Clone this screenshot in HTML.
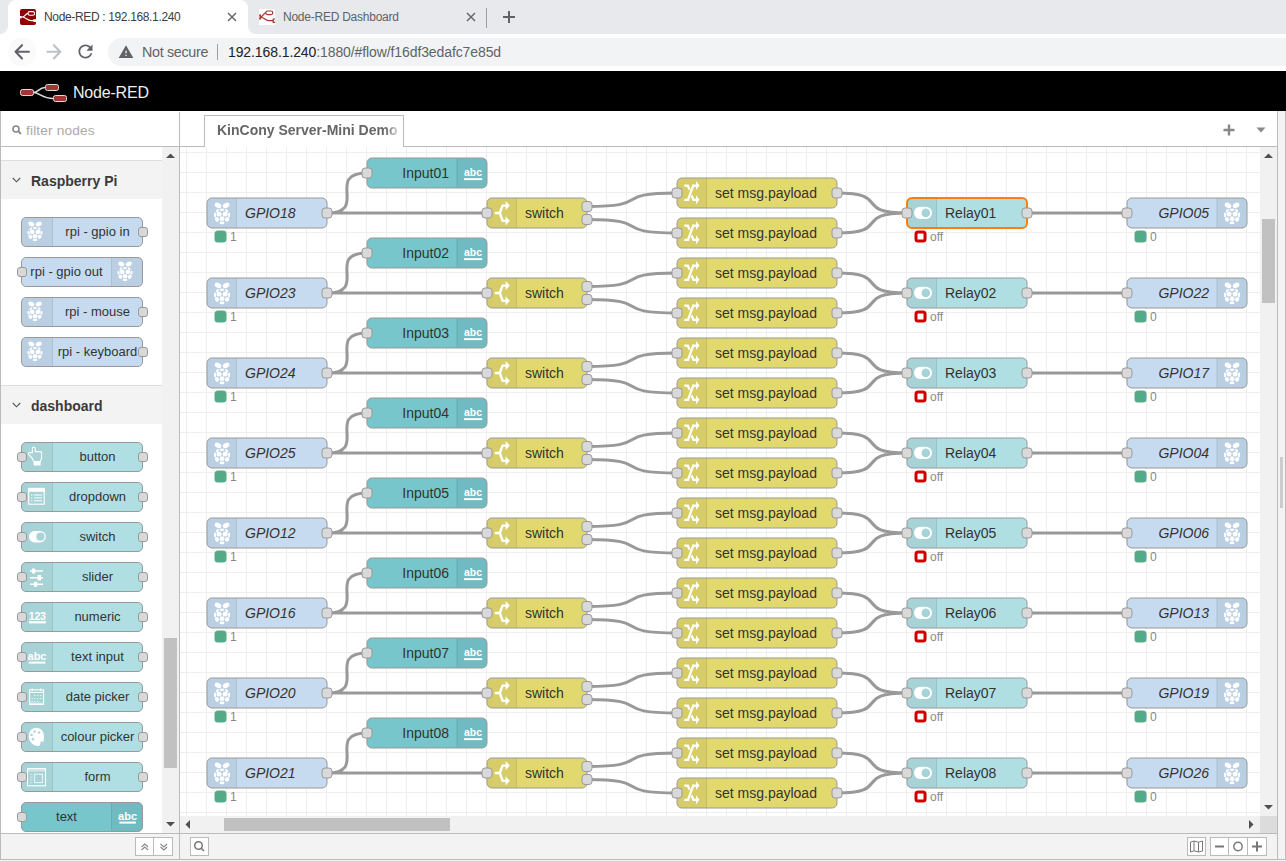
<!DOCTYPE html>
<html><head><meta charset="utf-8"><style>
*{box-sizing:border-box}
html,body{margin:0;padding:0;width:1286px;height:861px;overflow:hidden;background:#fff;font-family:"Liberation Sans", sans-serif}
.a{position:absolute}
</style></head><body>
<div class="a" style="left:0;top:0;width:1286px;height:34px;background:#e7e9ec"></div><div class="a" style="left:0;top:26px;width:264px;height:8px;background:#fff"></div><div class="a" style="left:-10px;top:0;width:18px;height:34px;background:#e7e9ec;border-bottom-right-radius:8px"></div><div class="a" style="left:248px;top:0;width:20px;height:34px;background:#e7e9ec;border-bottom-left-radius:8px"></div><div class="a" style="left:8px;top:0;width:240px;height:34px;background:#fff;border-radius:8px 8px 0 0"></div><svg class="a" style="left:20px;top:9px" width="16" height="16" viewBox="0 0 16 16"><rect x="0" y="0" width="16" height="16" rx="2" fill="#8f0000"/><g fill="none" stroke="#fff" stroke-width="1.1"><rect x="8" y="2.6" width="6.6" height="3.6" rx="1.8"/><path d="M0 8 H2.6 C5 8 5.6 4.4 8 4.4"/><path d="M2.6 8 C5.5 8 7.5 11.6 11 11.6 H14"/></g><rect x="13.4" y="10.2" width="2.6" height="2.8" fill="#fff"/><rect x="0" y="7" width="1.6" height="2.4" fill="#fff"/></svg><div class="a" style="left:44px;top:10px;font-size:12px;letter-spacing:-0.35px;color:#3c4043;line-height:14px;white-space:nowrap">Node-RED : 192.168.1.240</div><svg class="a" style="left:227px;top:12px" width="10" height="10" viewBox="0 0 10 10"><path d="M1 1 L9 9 M9 1 L1 9" stroke="#5f6368" stroke-width="1.4"/></svg><svg class="a" style="left:259px;top:9px" width="16" height="16" viewBox="0 0 16 16"><rect x="0" y="0" width="16" height="16" fill="#fff"/><g fill="none" stroke="#a33" stroke-width="1.2"><rect x="6.8" y="2" width="7" height="3.6" rx="1.8"/><path d="M0 8 H1.5 C4 8 4.5 3.8 6.8 3.8"/><path d="M1.5 8 C4.5 8 6.5 11.6 9.5 11.6 H14.5"/></g><path d="M0 6.2 H1.6 V9.8 H0" fill="none" stroke="#a33" stroke-width="1.2"/><path d="M16 10 H14.2 V13.4 H16" fill="none" stroke="#a33" stroke-width="1.2"/></svg><div class="a" style="left:283px;top:10px;font-size:12px;letter-spacing:-0.24px;color:#5f6368;line-height:14px;white-space:nowrap">Node-RED Dashboard</div><svg class="a" style="left:466px;top:12px" width="10" height="10" viewBox="0 0 10 10"><path d="M1 1 L9 9 M9 1 L1 9" stroke="#5f6368" stroke-width="1.4"/></svg><div class="a" style="left:486px;top:8px;width:1px;height:20px;background:#9aa0a6"></div><svg class="a" style="left:502px;top:10px" width="14" height="14" viewBox="0 0 14 14"><path d="M7 1 V13 M1 7 H13" stroke="#5f6368" stroke-width="2"/></svg><div class="a" style="left:0;top:34px;width:1286px;height:37px;background:#fff"></div><div class="a" style="left:8px;top:38px;width:28px;height:28px;border-radius:14px;background:#fafafa"></div><svg class="a" style="left:0;top:34.4px" width="40" height="36" viewBox="0 0 40 36"><path d="M28.9 17.8 H16.5 M22 11.2 L15.6 17.8 L22 24.4" fill="none" stroke="#5f6368" stroke-width="2.1" stroke-linecap="round" stroke-linejoin="round"/></svg><svg class="a" style="left:40px;top:34.4px" width="30" height="36" viewBox="0 0 30 36"><path d="M7.4 17.8 H20 M13.8 11.2 L20.3 17.8 L13.8 24.4" fill="none" stroke="#bdc1c6" stroke-width="2.1" stroke-linecap="round" stroke-linejoin="round"/></svg><svg class="a" style="left:75.4px;top:41.4px" width="21" height="21" viewBox="0 0 24 24"><path fill="#5f6368" d="M17.65 6.35C16.2 4.9 14.21 4 12 4c-4.42 0-7.99 3.58-7.99 8s3.57 8 7.99 8c3.73 0 6.84-2.55 7.73-6h-2.08c-.82 2.33-3.04 4-5.65 4-3.31 0-6-2.69-6-6s2.69-6 6-6c1.66 0 3.14.69 4.22 1.78L13 11h7V4l-2.35 2.35z"/></svg><div class="a" style="left:108px;top:38px;width:1200px;height:28px;background:#f1f3f4;border-radius:14px"></div><svg class="a" style="left:118px;top:44px" width="16" height="16" viewBox="0 0 24 24"><path fill="#5f6368" d="M1 21h22L12 2 1 21zm12-3h-2v-2h2v2zm0-4h-2v-4h2v4z"/></svg><div class="a" style="left:142px;top:43.5px;font-size:14.3px;letter-spacing:-0.3px;color:#5f6368;line-height:16px;white-space:nowrap">Not secure</div><div class="a" style="left:217px;top:44px;width:1px;height:16px;background:#9aa0a6"></div><div class="a" style="left:228px;top:44px;font-size:14px;letter-spacing:-0.1px;color:#5f6368;line-height:16px;white-space:nowrap"><span style="color:#202124">192.168.1.240</span>:1880/#flow/f16df3edafc7e85d</div><div class="a" style="left:0;top:71px;width:1286px;height:40px;background:#000"></div><svg class="a" style="left:18px;top:82px" width="52" height="22" viewBox="0 0 52 22"><g fill="none" stroke="#ddd" stroke-width="1.6"><path d="M15.5 10.5 C20 10.5 21 5.5 27 5.5"/><path d="M15.5 10.5 C21 10.5 25 16.5 35 16.5"/></g><g fill="#a33535" stroke="#ddd" stroke-width="1"><rect x="2.5" y="7.5" width="13" height="6" rx="2"/><rect x="27.5" y="2.5" width="13" height="6" rx="2"/><rect x="35.5" y="13.5" width="13" height="6" rx="2"/></g></svg><div class="a" style="left:73px;top:84px;font-size:16px;letter-spacing:-0.2px;color:#eee;line-height:18px;white-space:nowrap">Node-RED</div>
<div class="a" style="left:180px;top:147px;width:1080px;height:669px;background:#fff"></div>
<div class="a" style="left:0;top:111px;width:180px;height:750px;background:#fff"></div><div class="a" style="left:0;top:111px;width:1px;height:749px;background:#bbb"></div><div class="a" style="left:179px;top:112px;width:1px;height:748px;background:#bbb"></div><div class="a" style="left:0;top:146px;width:1277px;height:1px;background:#bbb"></div><svg class="a" style="left:12px;top:125px" width="10" height="10" viewBox="0 0 10 10"><circle cx="4" cy="4" r="3" fill="none" stroke="#888" stroke-width="1.6"/><path d="M6.2 6.2 L9 9" stroke="#888" stroke-width="1.8"/></svg><div class="a" style="left:26px;top:122.5px;font-size:13.7px;letter-spacing:0.15px;color:#aaa;line-height:16px;white-space:nowrap">filter nodes</div><div class="a" style="left:1px;top:160px;width:161px;height:1px;background:#ddd"></div><div class="a" style="left:1px;top:161px;width:161px;height:38px;background:#f3f3f3"></div><svg class="a" style="left:12px;top:177px" width="10" height="7" viewBox="0 0 10 7"><path d="M0.8 1 L4.5 4.8 L8.2 1" fill="none" stroke="#555" stroke-width="1.1"/></svg><div class="a" style="left:31px;top:173px;font-size:14px;font-weight:bold;color:#3a3a3a;line-height:16px;white-space:nowrap">Raspberry Pi</div><div class="a" style="left:1px;top:385px;width:161px;height:1px;background:#ddd"></div><div class="a" style="left:1px;top:386px;width:161px;height:38px;background:#f3f3f3"></div><svg class="a" style="left:12px;top:402px" width="10" height="7" viewBox="0 0 10 7"><path d="M0.8 1 L4.5 4.8 L8.2 1" fill="none" stroke="#555" stroke-width="1.1"/></svg><div class="a" style="left:31px;top:398px;font-size:14px;font-weight:bold;color:#3a3a3a;line-height:16px;white-space:nowrap">dashboard</div><div class="a" style="left:21px;top:217px;width:122px;height:30px;background:#c6dbef;border:1px solid #999;border-radius:5px;overflow:hidden"><div class="a" style="left:0;top:0;width:31px;height:28px;background:rgba(0,0,0,0.05);border-right:1px solid rgba(0,0,0,0.07)"></div><svg class="a" style="left:-2px;top:-1px" width="32" height="30" viewBox="0 0 32 30"><g fill="#fff" transform="translate(15 14) scale(0.92) translate(-15 -14)"><ellipse cx="11.00" cy="6.40" rx="3.5" ry="2.4" transform="rotate(28 11.00 6.40)"/><ellipse cx="19.10" cy="6.40" rx="3.5" ry="2.4" transform="rotate(-28 19.10 6.40)"/><ellipse cx="14.90" cy="10.80" rx="2.3" ry="1.2"/><ellipse cx="10.40" cy="11.50" rx="2.0" ry="1.0" transform="rotate(-48 10.40 11.50)"/><ellipse cx="19.60" cy="11.50" rx="2.0" ry="1.0" transform="rotate(48 19.60 11.50)"/><ellipse cx="12.00" cy="15.00" rx="2.5" ry="2.5"/><ellipse cx="18.10" cy="15.00" rx="2.5" ry="2.5"/><ellipse cx="8.00" cy="15.90" rx="1.15" ry="2.3"/><ellipse cx="22.00" cy="15.90" rx="1.15" ry="2.3"/><ellipse cx="15.05" cy="19.70" rx="2.5" ry="2.4"/><ellipse cx="10.00" cy="20.30" rx="2.0" ry="2.4" transform="rotate(-35 10.00 20.30)"/><ellipse cx="20.10" cy="20.30" rx="2.0" ry="2.4" transform="rotate(35 20.10 20.30)"/><ellipse cx="15.00" cy="23.90" rx="2.5" ry="1.35"/></g></svg><div class="a" style="left:31px;top:4px;width:89px;text-align:center;font-size:13px;color:#333;line-height:20px;white-space:nowrap">rpi - gpio in</div></div><div class="a" style="left:138px;top:227px;width:10px;height:10px;background:#d9d9d9;border:1px solid #999;border-radius:3px"></div><div class="a" style="left:21px;top:257px;width:122px;height:30px;background:#c6dbef;border:1px solid #999;border-radius:5px;overflow:hidden"><div class="a" style="right:0;top:0;width:31px;height:28px;background:rgba(0,0,0,0.05);border-left:1px solid rgba(0,0,0,0.07)"></div><svg class="a" style="right:0;top:-1px" width="32" height="30" viewBox="0 0 32 30"><g fill="#fff" transform="translate(15 14) scale(0.92) translate(-15 -14)"><ellipse cx="11.00" cy="6.40" rx="3.5" ry="2.4" transform="rotate(28 11.00 6.40)"/><ellipse cx="19.10" cy="6.40" rx="3.5" ry="2.4" transform="rotate(-28 19.10 6.40)"/><ellipse cx="14.90" cy="10.80" rx="2.3" ry="1.2"/><ellipse cx="10.40" cy="11.50" rx="2.0" ry="1.0" transform="rotate(-48 10.40 11.50)"/><ellipse cx="19.60" cy="11.50" rx="2.0" ry="1.0" transform="rotate(48 19.60 11.50)"/><ellipse cx="12.00" cy="15.00" rx="2.5" ry="2.5"/><ellipse cx="18.10" cy="15.00" rx="2.5" ry="2.5"/><ellipse cx="8.00" cy="15.90" rx="1.15" ry="2.3"/><ellipse cx="22.00" cy="15.90" rx="1.15" ry="2.3"/><ellipse cx="15.05" cy="19.70" rx="2.5" ry="2.4"/><ellipse cx="10.00" cy="20.30" rx="2.0" ry="2.4" transform="rotate(-35 10.00 20.30)"/><ellipse cx="20.10" cy="20.30" rx="2.0" ry="2.4" transform="rotate(35 20.10 20.30)"/><ellipse cx="15.00" cy="23.90" rx="2.5" ry="1.35"/></g></svg><div class="a" style="left:0px;top:4px;width:89px;text-align:center;font-size:13px;color:#333;line-height:20px;white-space:nowrap">rpi - gpio out</div></div><div class="a" style="left:17px;top:267px;width:10px;height:10px;background:#d9d9d9;border:1px solid #999;border-radius:3px"></div><div class="a" style="left:21px;top:297px;width:122px;height:30px;background:#c6dbef;border:1px solid #999;border-radius:5px;overflow:hidden"><div class="a" style="left:0;top:0;width:31px;height:28px;background:rgba(0,0,0,0.05);border-right:1px solid rgba(0,0,0,0.07)"></div><svg class="a" style="left:-2px;top:-1px" width="32" height="30" viewBox="0 0 32 30"><g fill="#fff" transform="translate(15 14) scale(0.92) translate(-15 -14)"><ellipse cx="11.00" cy="6.40" rx="3.5" ry="2.4" transform="rotate(28 11.00 6.40)"/><ellipse cx="19.10" cy="6.40" rx="3.5" ry="2.4" transform="rotate(-28 19.10 6.40)"/><ellipse cx="14.90" cy="10.80" rx="2.3" ry="1.2"/><ellipse cx="10.40" cy="11.50" rx="2.0" ry="1.0" transform="rotate(-48 10.40 11.50)"/><ellipse cx="19.60" cy="11.50" rx="2.0" ry="1.0" transform="rotate(48 19.60 11.50)"/><ellipse cx="12.00" cy="15.00" rx="2.5" ry="2.5"/><ellipse cx="18.10" cy="15.00" rx="2.5" ry="2.5"/><ellipse cx="8.00" cy="15.90" rx="1.15" ry="2.3"/><ellipse cx="22.00" cy="15.90" rx="1.15" ry="2.3"/><ellipse cx="15.05" cy="19.70" rx="2.5" ry="2.4"/><ellipse cx="10.00" cy="20.30" rx="2.0" ry="2.4" transform="rotate(-35 10.00 20.30)"/><ellipse cx="20.10" cy="20.30" rx="2.0" ry="2.4" transform="rotate(35 20.10 20.30)"/><ellipse cx="15.00" cy="23.90" rx="2.5" ry="1.35"/></g></svg><div class="a" style="left:31px;top:4px;width:89px;text-align:center;font-size:13px;color:#333;line-height:20px;white-space:nowrap">rpi - mouse</div></div><div class="a" style="left:138px;top:307px;width:10px;height:10px;background:#d9d9d9;border:1px solid #999;border-radius:3px"></div><div class="a" style="left:21px;top:337px;width:122px;height:30px;background:#c6dbef;border:1px solid #999;border-radius:5px;overflow:hidden"><div class="a" style="left:0;top:0;width:31px;height:28px;background:rgba(0,0,0,0.05);border-right:1px solid rgba(0,0,0,0.07)"></div><svg class="a" style="left:-2px;top:-1px" width="32" height="30" viewBox="0 0 32 30"><g fill="#fff" transform="translate(15 14) scale(0.92) translate(-15 -14)"><ellipse cx="11.00" cy="6.40" rx="3.5" ry="2.4" transform="rotate(28 11.00 6.40)"/><ellipse cx="19.10" cy="6.40" rx="3.5" ry="2.4" transform="rotate(-28 19.10 6.40)"/><ellipse cx="14.90" cy="10.80" rx="2.3" ry="1.2"/><ellipse cx="10.40" cy="11.50" rx="2.0" ry="1.0" transform="rotate(-48 10.40 11.50)"/><ellipse cx="19.60" cy="11.50" rx="2.0" ry="1.0" transform="rotate(48 19.60 11.50)"/><ellipse cx="12.00" cy="15.00" rx="2.5" ry="2.5"/><ellipse cx="18.10" cy="15.00" rx="2.5" ry="2.5"/><ellipse cx="8.00" cy="15.90" rx="1.15" ry="2.3"/><ellipse cx="22.00" cy="15.90" rx="1.15" ry="2.3"/><ellipse cx="15.05" cy="19.70" rx="2.5" ry="2.4"/><ellipse cx="10.00" cy="20.30" rx="2.0" ry="2.4" transform="rotate(-35 10.00 20.30)"/><ellipse cx="20.10" cy="20.30" rx="2.0" ry="2.4" transform="rotate(35 20.10 20.30)"/><ellipse cx="15.00" cy="23.90" rx="2.5" ry="1.35"/></g></svg><div class="a" style="left:31px;top:4px;width:89px;text-align:center;font-size:13px;color:#333;line-height:20px;white-space:nowrap">rpi - keyboard</div></div><div class="a" style="left:138px;top:347px;width:10px;height:10px;background:#d9d9d9;border:1px solid #999;border-radius:3px"></div><div class="a" style="left:21px;top:442px;width:122px;height:30px;background:#b0dfe3;border:1px solid #999;border-radius:5px;overflow:hidden"><div class="a" style="left:0;top:0;width:31px;height:28px;background:rgba(0,0,0,0.05);border-right:1px solid rgba(0,0,0,0.07)"></div><svg class="a" style="left:-2px;top:-1px" width="32" height="30" viewBox="0 0 32 30"><path d="M12.5 16.5 L8.8 12.6 Q8 11.2 9.5 10.6 L12.4 10.6 L12.4 6.2 Q12.6 5 13.8 5 Q15 5 15.2 6.2 L15.2 9.6 L20.6 9.6 Q21.6 9.8 21.6 11 L21.6 16.8 L20.4 18.5 L20.4 19.5 L13.6 19.5 Z" fill="none" stroke="#fff" stroke-width="1.1"/><rect x="13.6" y="19.6" width="7" height="3.8" rx="0.5" fill="#fff"/></svg><div class="a" style="left:31px;top:4px;width:89px;text-align:center;font-size:13px;color:#333;line-height:20px;white-space:nowrap">button</div></div><div class="a" style="left:17px;top:452px;width:10px;height:10px;background:#d9d9d9;border:1px solid #999;border-radius:3px"></div><div class="a" style="left:138px;top:452px;width:10px;height:10px;background:#d9d9d9;border:1px solid #999;border-radius:3px"></div><div class="a" style="left:21px;top:482px;width:122px;height:30px;background:#b0dfe3;border:1px solid #999;border-radius:5px;overflow:hidden"><div class="a" style="left:0;top:0;width:31px;height:28px;background:rgba(0,0,0,0.05);border-right:1px solid rgba(0,0,0,0.07)"></div><svg class="a" style="left:-2px;top:-1px" width="32" height="30" viewBox="0 0 32 30"><rect x="8.7" y="6.4" width="15.5" height="15.8" fill="none" stroke="#fff" stroke-width="1.1"/><rect x="8.2" y="6" width="16.5" height="3.8" fill="#fff"/><g stroke="#fff" stroke-width="1"><path d="M11 13 H12.4 M14 13 H22 M11 15.9 H12.4 M14 15.9 H22 M11 18.8 H12.4 M14 18.8 H22"/></g></svg><div class="a" style="left:31px;top:4px;width:89px;text-align:center;font-size:13px;color:#333;line-height:20px;white-space:nowrap">dropdown</div></div><div class="a" style="left:17px;top:492px;width:10px;height:10px;background:#d9d9d9;border:1px solid #999;border-radius:3px"></div><div class="a" style="left:138px;top:492px;width:10px;height:10px;background:#d9d9d9;border:1px solid #999;border-radius:3px"></div><div class="a" style="left:21px;top:522px;width:122px;height:30px;background:#b0dfe3;border:1px solid #999;border-radius:5px;overflow:hidden"><div class="a" style="left:0;top:0;width:31px;height:28px;background:rgba(0,0,0,0.05);border-right:1px solid rgba(0,0,0,0.07)"></div><svg class="a" style="left:-2px;top:-1px" width="32" height="30" viewBox="0 0 32 30"><rect x="9" y="8.9" width="16.8" height="11.6" rx="5.8" fill="#fff"/><circle cx="20.4" cy="14.7" r="4.1" fill="#a8d4d8"/></svg><div class="a" style="left:31px;top:4px;width:89px;text-align:center;font-size:13px;color:#333;line-height:20px;white-space:nowrap">switch</div></div><div class="a" style="left:17px;top:532px;width:10px;height:10px;background:#d9d9d9;border:1px solid #999;border-radius:3px"></div><div class="a" style="left:138px;top:532px;width:10px;height:10px;background:#d9d9d9;border:1px solid #999;border-radius:3px"></div><div class="a" style="left:21px;top:562px;width:122px;height:30px;background:#b0dfe3;border:1px solid #999;border-radius:5px;overflow:hidden"><div class="a" style="left:0;top:0;width:31px;height:28px;background:rgba(0,0,0,0.05);border-right:1px solid rgba(0,0,0,0.07)"></div><svg class="a" style="left:-2px;top:-1px" width="32" height="30" viewBox="0 0 32 30"><g stroke="#fff" stroke-width="1.4"><path d="M10 9 H23 M10 15.7 H23 M10 22.2 H23"/></g><g fill="#fff"><rect x="12" y="6.5" width="3.2" height="5"/><rect x="17.6" y="13" width="3.4" height="5.4"/><rect x="14" y="19.8" width="3.2" height="5"/></g></svg><div class="a" style="left:31px;top:4px;width:89px;text-align:center;font-size:13px;color:#333;line-height:20px;white-space:nowrap">slider</div></div><div class="a" style="left:17px;top:572px;width:10px;height:10px;background:#d9d9d9;border:1px solid #999;border-radius:3px"></div><div class="a" style="left:138px;top:572px;width:10px;height:10px;background:#d9d9d9;border:1px solid #999;border-radius:3px"></div><div class="a" style="left:21px;top:602px;width:122px;height:30px;background:#b0dfe3;border:1px solid #999;border-radius:5px;overflow:hidden"><div class="a" style="left:0;top:0;width:31px;height:28px;background:rgba(0,0,0,0.05);border-right:1px solid rgba(0,0,0,0.07)"></div><svg class="a" style="left:-2px;top:-1px" width="32" height="30" viewBox="0 0 32 30"><text x="17.3" y="17.8" text-anchor="middle" font-family='"Liberation Sans", sans-serif' font-weight="bold" font-size="10.5" fill="#fff" letter-spacing="-0.2">123</text><rect x="9" y="19.2" width="16.8" height="2.2" fill="#fff"/></svg><div class="a" style="left:31px;top:4px;width:89px;text-align:center;font-size:13px;color:#333;line-height:20px;white-space:nowrap">numeric</div></div><div class="a" style="left:17px;top:612px;width:10px;height:10px;background:#d9d9d9;border:1px solid #999;border-radius:3px"></div><div class="a" style="left:138px;top:612px;width:10px;height:10px;background:#d9d9d9;border:1px solid #999;border-radius:3px"></div><div class="a" style="left:21px;top:642px;width:122px;height:30px;background:#b0dfe3;border:1px solid #999;border-radius:5px;overflow:hidden"><div class="a" style="left:0;top:0;width:31px;height:28px;background:rgba(0,0,0,0.05);border-right:1px solid rgba(0,0,0,0.07)"></div><svg class="a" style="left:-2px;top:-1px" width="32" height="30" viewBox="0 0 32 30"><text x="17" y="17.6" text-anchor="middle" font-family='"Liberation Sans", sans-serif' font-weight="bold" font-size="11" fill="#fff">abc</text><rect x="8.8" y="19.6" width="16.5" height="2" fill="#fff"/></svg><div class="a" style="left:31px;top:4px;width:89px;text-align:center;font-size:13px;color:#333;line-height:20px;white-space:nowrap">text input</div></div><div class="a" style="left:17px;top:652px;width:10px;height:10px;background:#d9d9d9;border:1px solid #999;border-radius:3px"></div><div class="a" style="left:138px;top:652px;width:10px;height:10px;background:#d9d9d9;border:1px solid #999;border-radius:3px"></div><div class="a" style="left:21px;top:682px;width:122px;height:30px;background:#b0dfe3;border:1px solid #999;border-radius:5px;overflow:hidden"><div class="a" style="left:0;top:0;width:31px;height:28px;background:rgba(0,0,0,0.05);border-right:1px solid rgba(0,0,0,0.07)"></div><svg class="a" style="left:-2px;top:-1px" width="32" height="30" viewBox="0 0 32 30"><rect x="9.6" y="7.8" width="14" height="14.6" fill="none" stroke="#fff" stroke-width="1.1"/><path d="M9.6 10.4 H23.6" stroke="#fff" stroke-width="1"/><rect x="9.6" y="20.6" width="14" height="1.8" fill="#fff" fill-opacity="0.6"/><g fill="#fff" fill-opacity="0.8"><rect x="14" y="13" width="1.4" height="1"/><rect x="17" y="13" width="1.4" height="1"/><rect x="20" y="13" width="1.4" height="1"/><rect x="11.5" y="16" width="1.4" height="1"/><rect x="14" y="16" width="1.4" height="1"/><rect x="17" y="16" width="1.4" height="1"/><rect x="20" y="16" width="1.4" height="1"/><rect x="11.5" y="18.8" width="1.4" height="1"/><rect x="14" y="18.8" width="1.4" height="1"/><rect x="17" y="18.8" width="1.4" height="1"/></g><rect x="11.8" y="6.5" width="1.3" height="2.5" fill="#fff"/><rect x="20" y="6.5" width="1.3" height="2.5" fill="#fff"/></svg><div class="a" style="left:31px;top:4px;width:89px;text-align:center;font-size:13px;color:#333;line-height:20px;white-space:nowrap">date picker</div></div><div class="a" style="left:17px;top:692px;width:10px;height:10px;background:#d9d9d9;border:1px solid #999;border-radius:3px"></div><div class="a" style="left:138px;top:692px;width:10px;height:10px;background:#d9d9d9;border:1px solid #999;border-radius:3px"></div><div class="a" style="left:21px;top:722px;width:122px;height:30px;background:#b0dfe3;border:1px solid #999;border-radius:5px;overflow:hidden"><div class="a" style="left:0;top:0;width:31px;height:28px;background:rgba(0,0,0,0.05);border-right:1px solid rgba(0,0,0,0.07)"></div><svg class="a" style="left:-2px;top:-1px" width="32" height="30" viewBox="0 0 32 30"><path d="M16.5 5.8 C11.5 5.8 8.8 9.8 8.8 14 C8.8 19.5 13 24 18 24 C19.8 24 20.4 22.8 20.4 21.5 C20.4 19.8 21 19 21.8 19.3 C22.5 19.5 22.6 20.3 23 20 C23.8 19 24 17.5 24 15 C24 9.5 20.8 5.8 16.5 5.8 Z" fill="#fff"/><g fill="#a8d4d8"><circle cx="14.7" cy="9.6" r="1.2"/><circle cx="19" cy="10.6" r="1.2"/><circle cx="11.6" cy="12.9" r="1.2"/><circle cx="12.9" cy="17.2" r="1.2"/></g></svg><div class="a" style="left:31px;top:4px;width:89px;text-align:center;font-size:13px;color:#333;line-height:20px;white-space:nowrap">colour picker</div></div><div class="a" style="left:17px;top:732px;width:10px;height:10px;background:#d9d9d9;border:1px solid #999;border-radius:3px"></div><div class="a" style="left:138px;top:732px;width:10px;height:10px;background:#d9d9d9;border:1px solid #999;border-radius:3px"></div><div class="a" style="left:21px;top:762px;width:122px;height:30px;background:#b0dfe3;border:1px solid #999;border-radius:5px;overflow:hidden"><div class="a" style="left:0;top:0;width:31px;height:28px;background:rgba(0,0,0,0.05);border-right:1px solid rgba(0,0,0,0.07)"></div><svg class="a" style="left:-2px;top:-1px" width="32" height="30" viewBox="0 0 32 30"><rect x="7.5" y="6.6" width="18" height="17.2" fill="none" stroke="#fff" stroke-width="1.1"/><rect x="7.5" y="6.6" width="18" height="3" fill="#fff" fill-opacity="0.45"/><rect x="14.6" y="12.2" width="7.8" height="8.4" fill="none" stroke="#fff" stroke-width="1" stroke-opacity="0.8"/><g fill="#fff" fill-opacity="0.55"><rect x="10" y="11.8" width="2.4" height="1"/><rect x="10" y="14.6" width="2.4" height="1"/><rect x="10" y="17.4" width="2.4" height="1"/><rect x="10" y="20.2" width="2.4" height="1"/></g></svg><div class="a" style="left:31px;top:4px;width:89px;text-align:center;font-size:13px;color:#333;line-height:20px;white-space:nowrap">form</div></div><div class="a" style="left:17px;top:772px;width:10px;height:10px;background:#d9d9d9;border:1px solid #999;border-radius:3px"></div><div class="a" style="left:138px;top:772px;width:10px;height:10px;background:#d9d9d9;border:1px solid #999;border-radius:3px"></div><div class="a" style="left:21px;top:802px;width:122px;height:30px;background:#77c6cc;border:1px solid #999;border-radius:5px;overflow:hidden"><div class="a" style="right:0;top:0;width:31px;height:28px;background:rgba(0,0,0,0.05);border-left:1px solid rgba(0,0,0,0.07)"></div><svg class="a" style="right:0;top:-1px" width="32" height="30" viewBox="0 0 32 30"><text x="17.6" y="17.6" text-anchor="middle" font-family='"Liberation Sans", sans-serif' font-weight="bold" font-size="11" fill="#fff">abc</text><rect x="9.4" y="19.6" width="16.5" height="2" fill="#fff"/></svg><div class="a" style="left:0px;top:4px;width:89px;text-align:center;font-size:13px;color:#333;line-height:20px;white-space:nowrap">text</div></div><div class="a" style="left:17px;top:812px;width:10px;height:10px;background:#d9d9d9;border:1px solid #999;border-radius:3px"></div><div class="a" style="left:162px;top:147px;width:17px;height:686px;background:#f1f1f1"></div><svg class="a" style="left:166px;top:153px" width="9" height="5" viewBox="0 0 9 5"><path d="M0 5 L4.5 0.5 L9 5 Z" fill="#505050"/></svg><svg class="a" style="left:166px;top:822px" width="9" height="5" viewBox="0 0 9 5"><path d="M0 0 L4.5 4.5 L9 0 Z" fill="#505050"/></svg><div class="a" style="left:164px;top:638px;width:13px;height:130px;background:#c1c1c1"></div><div class="a" style="left:1px;top:833px;width:178px;height:1px;background:#bbb"></div><div class="a" style="left:1px;top:834px;width:178px;height:25px;background:#f3f3f3"></div><div class="a" style="left:135px;top:837px;width:38px;height:19px;background:#fff;border:1px solid #bbb"></div><div class="a" style="left:153px;top:837px;width:1px;height:19px;background:#bbb"></div><svg class="a" style="left:140px;top:842px" width="10" height="10" viewBox="0 0 10 10"><path d="M1.5 5 L4.8 2 L8.1 5 M1.5 8 L4.8 5 L8.1 8" fill="none" stroke="#888" stroke-width="1.1"/></svg><svg class="a" style="left:159px;top:842px" width="10" height="10" viewBox="0 0 10 10"><path d="M1.5 2 L4.8 5 L8.1 2 M1.5 5 L4.8 8 L8.1 5" fill="none" stroke="#888" stroke-width="1.1"/></svg>
<div class="a" style="left:180px;top:111px;width:1097px;height:35px;background:#fff"></div><div class="a" style="left:204px;top:115px;width:200px;height:32px;background:#fff;border:1px solid #bbb;border-bottom:none"></div><div class="a" style="left:217px;top:121px;width:182px;height:20px;font-size:14px;font-weight:bold;color:#666;line-height:18px;white-space:nowrap;overflow:hidden;-webkit-mask-image:linear-gradient(to right,#000 168px,rgba(0,0,0,0.2) 182px)">KinCony Server-Mini Demo</div><svg class="a" style="left:1223px;top:124px" width="12" height="12" viewBox="0 0 12 12"><path d="M6 0.5 V11.5 M0.5 6 H11.5" stroke="#888" stroke-width="2.4"/></svg><svg class="a" style="left:1256px;top:127px" width="10" height="6" viewBox="0 0 10 6"><path d="M0.5 0.5 L9.5 0.5 L5 5.5 Z" fill="#888"/></svg><div class="a" style="left:1277px;top:111px;width:1px;height:749px;background:#bbb"></div><div class="a" style="left:1278px;top:111px;width:8px;height:750px;background:#f3f3f3"></div><div class="a" style="left:1285px;top:111px;width:1px;height:749px;background:#bbb"></div><div class="a" style="left:1280px;top:457px;width:3px;height:51px;background:#ccc"></div><div class="a" style="left:1260px;top:147px;width:17px;height:669px;background:#f1f1f1"></div><svg class="a" style="left:1264px;top:153px" width="9" height="5" viewBox="0 0 9 5"><path d="M0 5 L4.5 0.5 L9 5 Z" fill="#505050"/></svg><svg class="a" style="left:1264px;top:805px" width="9" height="5" viewBox="0 0 9 5"><path d="M0 0 L4.5 4.5 L9 0 Z" fill="#505050"/></svg><div class="a" style="left:1262px;top:219px;width:13px;height:84px;background:#c1c1c1"></div><div class="a" style="left:180px;top:816px;width:1080px;height:17px;background:#f1f1f1"></div><svg class="a" style="left:185px;top:820px" width="5" height="9" viewBox="0 0 5 9"><path d="M5 0 L0.5 4.5 L5 9 Z" fill="#505050"/></svg><svg class="a" style="left:1249px;top:820px" width="5" height="9" viewBox="0 0 5 9"><path d="M0 0 L4.5 4.5 L0 9 Z" fill="#505050"/></svg><div class="a" style="left:224px;top:818px;width:226px;height:13px;background:#c1c1c1"></div><div class="a" style="left:1260px;top:816px;width:17px;height:17px;background:#dcdcdc"></div><div class="a" style="left:180px;top:833px;width:1097px;height:1px;background:#bbb"></div><div class="a" style="left:180px;top:834px;width:1097px;height:25px;background:#f3f3f3"></div><div class="a" style="left:0;top:859px;width:1286px;height:1px;background:#bbb"></div><div class="a" style="left:0;top:860px;width:1286px;height:1px;background:#eef3f9"></div><div class="a" style="left:190px;top:837px;width:19px;height:19px;background:#fff;border:1px solid #bbb"></div><svg class="a" style="left:193px;top:840px" width="13" height="13" viewBox="0 0 13 13"><circle cx="5.5" cy="5.5" r="3.8" fill="none" stroke="#777" stroke-width="1.5"/><path d="M8.2 8.2 L11 11" stroke="#777" stroke-width="1.6"/></svg><div class="a" style="left:1187px;top:837px;width:19px;height:19px;background:#fff;border:1px solid #bbb"></div><svg class="a" style="left:1189px;top:840px" width="15" height="13" viewBox="0 0 15 13"><path d="M1.5 2 L5 1 L9.5 2.2 L13.5 1 V11 L9.5 12 L5 10.8 L1.5 12 Z M5 1 V10.8 M9.5 2.2 V12" fill="none" stroke="#777" stroke-width="1"/></svg><div class="a" style="left:1210px;top:837px;width:57px;height:19px;background:#fff;border:1px solid #bbb"></div><div class="a" style="left:1228px;top:837px;width:1px;height:19px;background:#bbb"></div><div class="a" style="left:1247px;top:837px;width:1px;height:19px;background:#bbb"></div><svg class="a" style="left:1214px;top:840px" width="12" height="13" viewBox="0 0 12 13"><path d="M1 6.5 H10" stroke="#777" stroke-width="2"/></svg><svg class="a" style="left:1232px;top:840px" width="12" height="13" viewBox="0 0 12 13"><circle cx="6" cy="6.5" r="4.2" fill="none" stroke="#777" stroke-width="1.4"/></svg><svg class="a" style="left:1251px;top:840px" width="12" height="13" viewBox="0 0 12 13"><path d="M1 6.5 H11 M6 1.5 V11.5" stroke="#777" stroke-width="2"/></svg>
<svg width="1286" height="861" viewBox="0 0 1286 861" style="position:absolute;left:0;top:0" font-family='"Liberation Sans", sans-serif'><defs><clipPath id="cc"><rect x="180" y="147" width="1080" height="669"/></clipPath></defs><g clip-path="url(#cc)"><path d="M 186.5 147 V 816 M 206.5 147 V 816 M 226.5 147 V 816 M 246.5 147 V 816 M 266.5 147 V 816 M 286.5 147 V 816 M 306.5 147 V 816 M 326.5 147 V 816 M 346.5 147 V 816 M 366.5 147 V 816 M 386.5 147 V 816 M 406.5 147 V 816 M 426.5 147 V 816 M 446.5 147 V 816 M 466.5 147 V 816 M 486.5 147 V 816 M 506.5 147 V 816 M 526.5 147 V 816 M 546.5 147 V 816 M 566.5 147 V 816 M 586.5 147 V 816 M 606.5 147 V 816 M 626.5 147 V 816 M 646.5 147 V 816 M 666.5 147 V 816 M 686.5 147 V 816 M 706.5 147 V 816 M 726.5 147 V 816 M 746.5 147 V 816 M 766.5 147 V 816 M 786.5 147 V 816 M 806.5 147 V 816 M 826.5 147 V 816 M 846.5 147 V 816 M 866.5 147 V 816 M 886.5 147 V 816 M 906.5 147 V 816 M 926.5 147 V 816 M 946.5 147 V 816 M 966.5 147 V 816 M 986.5 147 V 816 M 1006.5 147 V 816 M 1026.5 147 V 816 M 1046.5 147 V 816 M 1066.5 147 V 816 M 1086.5 147 V 816 M 1106.5 147 V 816 M 1126.5 147 V 816 M 1146.5 147 V 816 M 1166.5 147 V 816 M 1186.5 147 V 816 M 1206.5 147 V 816 M 1226.5 147 V 816 M 1246.5 147 V 816 M 180 152.5 H 1260 M 180 172.5 H 1260 M 180 192.5 H 1260 M 180 212.5 H 1260 M 180 232.5 H 1260 M 180 252.5 H 1260 M 180 272.5 H 1260 M 180 292.5 H 1260 M 180 312.5 H 1260 M 180 332.5 H 1260 M 180 352.5 H 1260 M 180 372.5 H 1260 M 180 392.5 H 1260 M 180 412.5 H 1260 M 180 432.5 H 1260 M 180 452.5 H 1260 M 180 472.5 H 1260 M 180 492.5 H 1260 M 180 512.5 H 1260 M 180 532.5 H 1260 M 180 552.5 H 1260 M 180 572.5 H 1260 M 180 592.5 H 1260 M 180 612.5 H 1260 M 180 632.5 H 1260 M 180 652.5 H 1260 M 180 672.5 H 1260 M 180 692.5 H 1260 M 180 712.5 H 1260 M 180 732.5 H 1260 M 180 752.5 H 1260 M 180 772.5 H 1260 M 180 792.5 H 1260 M 180 812.5 H 1260" stroke="#eee" stroke-width="1" fill="none"/><path d="M 327 213 C 369.42640687119285 213 324.57359312880715 173 367 173 M 327 213 C 402.0 213 412.0 213 487 213 M 587 206.5 C 655.2551509045288 206.5 608.7448490954712 193 677 193 M 587 219.5 C 655.2551509045288 219.5 608.7448490954712 233 677 233 M 837 193 C 891.6008241696039 193 852.3991758303961 213 907 213 M 837 233 C 891.6008241696039 233 852.3991758303961 213 907 213 M 1027 213 C 1102.0 213 1052.0 213 1127 213 M 327 293 C 369.42640687119285 293 324.57359312880715 253 367 253 M 327 293 C 402.0 293 412.0 293 487 293 M 587 286.5 C 655.2551509045288 286.5 608.7448490954712 273 677 273 M 587 299.5 C 655.2551509045288 299.5 608.7448490954712 313 677 313 M 837 273 C 891.6008241696039 273 852.3991758303961 293 907 293 M 837 313 C 891.6008241696039 313 852.3991758303961 293 907 293 M 1027 293 C 1102.0 293 1052.0 293 1127 293 M 327 373 C 369.42640687119285 373 324.57359312880715 333 367 333 M 327 373 C 402.0 373 412.0 373 487 373 M 587 366.5 C 655.2551509045288 366.5 608.7448490954712 353 677 353 M 587 379.5 C 655.2551509045288 379.5 608.7448490954712 393 677 393 M 837 353 C 891.6008241696039 353 852.3991758303961 373 907 373 M 837 393 C 891.6008241696039 393 852.3991758303961 373 907 373 M 1027 373 C 1102.0 373 1052.0 373 1127 373 M 327 453 C 369.42640687119285 453 324.57359312880715 413 367 413 M 327 453 C 402.0 453 412.0 453 487 453 M 587 446.5 C 655.2551509045288 446.5 608.7448490954712 433 677 433 M 587 459.5 C 655.2551509045288 459.5 608.7448490954712 473 677 473 M 837 433 C 891.6008241696039 433 852.3991758303961 453 907 453 M 837 473 C 891.6008241696039 473 852.3991758303961 453 907 453 M 1027 453 C 1102.0 453 1052.0 453 1127 453 M 327 533 C 369.42640687119285 533 324.57359312880715 493 367 493 M 327 533 C 402.0 533 412.0 533 487 533 M 587 526.5 C 655.2551509045288 526.5 608.7448490954712 513 677 513 M 587 539.5 C 655.2551509045288 539.5 608.7448490954712 553 677 553 M 837 513 C 891.6008241696039 513 852.3991758303961 533 907 533 M 837 553 C 891.6008241696039 553 852.3991758303961 533 907 533 M 1027 533 C 1102.0 533 1052.0 533 1127 533 M 327 613 C 369.42640687119285 613 324.57359312880715 573 367 573 M 327 613 C 402.0 613 412.0 613 487 613 M 587 606.5 C 655.2551509045288 606.5 608.7448490954712 593 677 593 M 587 619.5 C 655.2551509045288 619.5 608.7448490954712 633 677 633 M 837 593 C 891.6008241696039 593 852.3991758303961 613 907 613 M 837 633 C 891.6008241696039 633 852.3991758303961 613 907 613 M 1027 613 C 1102.0 613 1052.0 613 1127 613 M 327 693 C 369.42640687119285 693 324.57359312880715 653 367 653 M 327 693 C 402.0 693 412.0 693 487 693 M 587 686.5 C 655.2551509045288 686.5 608.7448490954712 673 677 673 M 587 699.5 C 655.2551509045288 699.5 608.7448490954712 713 677 713 M 837 673 C 891.6008241696039 673 852.3991758303961 693 907 693 M 837 713 C 891.6008241696039 713 852.3991758303961 693 907 693 M 1027 693 C 1102.0 693 1052.0 693 1127 693 M 327 773 C 369.42640687119285 773 324.57359312880715 733 367 733 M 327 773 C 402.0 773 412.0 773 487 773 M 587 766.5 C 655.2551509045288 766.5 608.7448490954712 753 677 753 M 587 779.5 C 655.2551509045288 779.5 608.7448490954712 793 677 793 M 837 753 C 891.6008241696039 753 852.3991758303961 773 907 773 M 837 793 C 891.6008241696039 793 852.3991758303961 773 907 773 M 1027 773 C 1102.0 773 1052.0 773 1127 773" stroke="#999" stroke-width="3" fill="none"/><rect x="207" y="198" width="120" height="30" rx="5" fill="#c6dbef" stroke="#999" stroke-width="1"/><path d="M 236.5 198.5 H 212 Q 207.5 198.5 207.5 203.5 V 222.5 Q 207.5 227.5 212 227.5 H 236.5 Z" fill="#000" fill-opacity="0.05"/><line x1="236.5" y1="198.5" x2="236.5" y2="227.5" stroke="#000" stroke-opacity="0.1"/><g fill="#fff"><ellipse cx="218.00" cy="205.40" rx="3.5" ry="2.4" transform="rotate(28 218.00 205.40)"/><ellipse cx="226.10" cy="205.40" rx="3.5" ry="2.4" transform="rotate(-28 226.10 205.40)"/><ellipse cx="221.90" cy="209.80" rx="2.3" ry="1.2"/><ellipse cx="217.40" cy="210.50" rx="2.0" ry="1.0" transform="rotate(-48 217.40 210.50)"/><ellipse cx="226.60" cy="210.50" rx="2.0" ry="1.0" transform="rotate(48 226.60 210.50)"/><ellipse cx="219.00" cy="214.00" rx="2.5" ry="2.5"/><ellipse cx="225.10" cy="214.00" rx="2.5" ry="2.5"/><ellipse cx="215.00" cy="214.90" rx="1.15" ry="2.3"/><ellipse cx="229.00" cy="214.90" rx="1.15" ry="2.3"/><ellipse cx="222.05" cy="218.70" rx="2.5" ry="2.4"/><ellipse cx="217.00" cy="219.30" rx="2.0" ry="2.4" transform="rotate(-35 217.00 219.30)"/><ellipse cx="227.10" cy="219.30" rx="2.0" ry="2.4" transform="rotate(35 227.10 219.30)"/><ellipse cx="222.00" cy="222.90" rx="2.5" ry="1.35"/></g><text x="245" y="218" font-size="14" fill="#333" font-style="italic">GPIO18</text><rect x="322" y="208" width="10" height="10" rx="3" fill="#d9d9d9" stroke="#999"/><rect x="216" y="232" width="9" height="9" rx="2" fill="#5a8" stroke="#5a8" stroke-width="3"/><text x="230" y="241" font-size="12" fill="#888">1</text><rect x="367" y="158" width="120" height="30" rx="5" fill="#77c6cc" stroke="#999" stroke-width="1"/><path d="M 457 158.5 H 482 Q 486.5 158.5 486.5 163.5 V 182.5 Q 486.5 187.5 482 187.5 H 457 Z" fill="#000" fill-opacity="0.05"/><line x1="457" y1="158.5" x2="457" y2="187.5" stroke="#000" stroke-opacity="0.1"/><text x="464" y="176" textLength="18" lengthAdjust="spacingAndGlyphs" font-family='"Liberation Sans", sans-serif' font-weight="bold" font-size="11.2" fill="#fff">abc</text><rect x="464" y="178.2" width="18.2" height="1.9" fill="#fff"/><text x="449" y="178" text-anchor="end" font-size="14" fill="#333">Input01</text><rect x="362" y="168" width="10" height="10" rx="3" fill="#d9d9d9" stroke="#999"/><rect x="487" y="198" width="100" height="30" rx="5" fill="#e2d96e" stroke="#999" stroke-width="1"/><path d="M 516.5 198.5 H 492 Q 487.5 198.5 487.5 203.5 V 222.5 Q 487.5 227.5 492 227.5 H 516.5 Z" fill="#000" fill-opacity="0.05"/><line x1="516.5" y1="198.5" x2="516.5" y2="227.5" stroke="#000" stroke-opacity="0.1"/><g fill="none" stroke="#fff" stroke-width="2.4" stroke-linejoin="miter"><path d="M 494.8 213 H 499.8 L 502.6 205.6 H 506.6"/><path d="M 499.8 213 L 502.6 220.8 H 506.6"/></g><g fill="#fff"><path d="M 505.6 201 L 509.8 205.6 L 505.6 210.2 Z"/><path d="M 505.6 216.2 L 509.8 220.8 L 505.6 225.4 Z"/></g><text x="525" y="218" font-size="14" fill="#333">switch</text><rect x="482" y="208" width="10" height="10" rx="3" fill="#d9d9d9" stroke="#999"/><rect x="582" y="201.5" width="10" height="10" rx="3" fill="#d9d9d9" stroke="#999"/><rect x="582" y="214.5" width="10" height="10" rx="3" fill="#d9d9d9" stroke="#999"/><rect x="677" y="178" width="160" height="30" rx="5" fill="#e2d96e" stroke="#999" stroke-width="1"/><path d="M 706.5 178.5 H 682 Q 677.5 178.5 677.5 183.5 V 202.5 Q 677.5 207.5 682 207.5 H 706.5 Z" fill="#000" fill-opacity="0.05"/><line x1="706.5" y1="178.5" x2="706.5" y2="207.5" stroke="#000" stroke-opacity="0.1"/><g fill="none" stroke="#fff" stroke-width="2.3"><path d="M 684.2 185.6 H 687.8 L 689.6 189.8"/><path d="M 684.2 199.8 H 688 L 693.2 185.6 H 696.6"/><path d="M 691.6 195.4 L 693.4 199.8 H 696.6"/></g><g fill="#fff"><path d="M 696 181.1 L 699.4 185.6 L 696 190.1 Z"/><path d="M 696 195.3 L 699.4 199.8 L 696 204.3 Z"/></g><text x="715" y="198" font-size="14" fill="#333">set msg.payload</text><rect x="672" y="188" width="10" height="10" rx="3" fill="#d9d9d9" stroke="#999"/><rect x="832" y="188" width="10" height="10" rx="3" fill="#d9d9d9" stroke="#999"/><rect x="677" y="218" width="160" height="30" rx="5" fill="#e2d96e" stroke="#999" stroke-width="1"/><path d="M 706.5 218.5 H 682 Q 677.5 218.5 677.5 223.5 V 242.5 Q 677.5 247.5 682 247.5 H 706.5 Z" fill="#000" fill-opacity="0.05"/><line x1="706.5" y1="218.5" x2="706.5" y2="247.5" stroke="#000" stroke-opacity="0.1"/><g fill="none" stroke="#fff" stroke-width="2.3"><path d="M 684.2 225.6 H 687.8 L 689.6 229.8"/><path d="M 684.2 239.8 H 688 L 693.2 225.6 H 696.6"/><path d="M 691.6 235.4 L 693.4 239.8 H 696.6"/></g><g fill="#fff"><path d="M 696 221.1 L 699.4 225.6 L 696 230.1 Z"/><path d="M 696 235.3 L 699.4 239.8 L 696 244.3 Z"/></g><text x="715" y="238" font-size="14" fill="#333">set msg.payload</text><rect x="672" y="228" width="10" height="10" rx="3" fill="#d9d9d9" stroke="#999"/><rect x="832" y="228" width="10" height="10" rx="3" fill="#d9d9d9" stroke="#999"/><rect x="907" y="198" width="120" height="30" rx="5" fill="#b0dfe3" stroke="#ff7f0e" stroke-width="2"/><path d="M 936.5 198.5 H 912 Q 907.5 198.5 907.5 203.5 V 222.5 Q 907.5 227.5 912 227.5 H 936.5 Z" fill="#000" fill-opacity="0.05"/><line x1="936.5" y1="198.5" x2="936.5" y2="227.5" stroke="#000" stroke-opacity="0.1"/><rect x="914" y="206.8" width="18" height="12.2" rx="6.1" fill="#fff"/><circle cx="925.8" cy="212.9" r="4.3" fill="#a8d4d8"/><text x="945" y="218" font-size="14" fill="#333">Relay01</text><rect x="902" y="208" width="10" height="10" rx="3" fill="#d9d9d9" stroke="#999"/><rect x="1022" y="208" width="10" height="10" rx="3" fill="#d9d9d9" stroke="#999"/><rect x="916" y="232" width="9" height="9" rx="2" fill="#fff" stroke="#c00" stroke-width="3"/><text x="930" y="241" font-size="12" fill="#888">off</text><rect x="1127" y="198" width="120" height="30" rx="5" fill="#c6dbef" stroke="#999" stroke-width="1"/><path d="M 1217 198.5 H 1242 Q 1246.5 198.5 1246.5 203.5 V 222.5 Q 1246.5 227.5 1242 227.5 H 1217 Z" fill="#000" fill-opacity="0.05"/><line x1="1217" y1="198.5" x2="1217" y2="227.5" stroke="#000" stroke-opacity="0.1"/><g fill="#fff"><ellipse cx="1228.00" cy="205.40" rx="3.5" ry="2.4" transform="rotate(28 1228.00 205.40)"/><ellipse cx="1236.10" cy="205.40" rx="3.5" ry="2.4" transform="rotate(-28 1236.10 205.40)"/><ellipse cx="1231.90" cy="209.80" rx="2.3" ry="1.2"/><ellipse cx="1227.40" cy="210.50" rx="2.0" ry="1.0" transform="rotate(-48 1227.40 210.50)"/><ellipse cx="1236.60" cy="210.50" rx="2.0" ry="1.0" transform="rotate(48 1236.60 210.50)"/><ellipse cx="1229.00" cy="214.00" rx="2.5" ry="2.5"/><ellipse cx="1235.10" cy="214.00" rx="2.5" ry="2.5"/><ellipse cx="1225.00" cy="214.90" rx="1.15" ry="2.3"/><ellipse cx="1239.00" cy="214.90" rx="1.15" ry="2.3"/><ellipse cx="1232.05" cy="218.70" rx="2.5" ry="2.4"/><ellipse cx="1227.00" cy="219.30" rx="2.0" ry="2.4" transform="rotate(-35 1227.00 219.30)"/><ellipse cx="1237.10" cy="219.30" rx="2.0" ry="2.4" transform="rotate(35 1237.10 219.30)"/><ellipse cx="1232.00" cy="222.90" rx="2.5" ry="1.35"/></g><text x="1209" y="218" text-anchor="end" font-size="14" fill="#333" font-style="italic">GPIO05</text><rect x="1122" y="208" width="10" height="10" rx="3" fill="#d9d9d9" stroke="#999"/><rect x="1136" y="232" width="9" height="9" rx="2" fill="#5a8" stroke="#5a8" stroke-width="3"/><text x="1150" y="241" font-size="12" fill="#888">0</text><rect x="207" y="278" width="120" height="30" rx="5" fill="#c6dbef" stroke="#999" stroke-width="1"/><path d="M 236.5 278.5 H 212 Q 207.5 278.5 207.5 283.5 V 302.5 Q 207.5 307.5 212 307.5 H 236.5 Z" fill="#000" fill-opacity="0.05"/><line x1="236.5" y1="278.5" x2="236.5" y2="307.5" stroke="#000" stroke-opacity="0.1"/><g fill="#fff"><ellipse cx="218.00" cy="285.40" rx="3.5" ry="2.4" transform="rotate(28 218.00 285.40)"/><ellipse cx="226.10" cy="285.40" rx="3.5" ry="2.4" transform="rotate(-28 226.10 285.40)"/><ellipse cx="221.90" cy="289.80" rx="2.3" ry="1.2"/><ellipse cx="217.40" cy="290.50" rx="2.0" ry="1.0" transform="rotate(-48 217.40 290.50)"/><ellipse cx="226.60" cy="290.50" rx="2.0" ry="1.0" transform="rotate(48 226.60 290.50)"/><ellipse cx="219.00" cy="294.00" rx="2.5" ry="2.5"/><ellipse cx="225.10" cy="294.00" rx="2.5" ry="2.5"/><ellipse cx="215.00" cy="294.90" rx="1.15" ry="2.3"/><ellipse cx="229.00" cy="294.90" rx="1.15" ry="2.3"/><ellipse cx="222.05" cy="298.70" rx="2.5" ry="2.4"/><ellipse cx="217.00" cy="299.30" rx="2.0" ry="2.4" transform="rotate(-35 217.00 299.30)"/><ellipse cx="227.10" cy="299.30" rx="2.0" ry="2.4" transform="rotate(35 227.10 299.30)"/><ellipse cx="222.00" cy="302.90" rx="2.5" ry="1.35"/></g><text x="245" y="298" font-size="14" fill="#333" font-style="italic">GPIO23</text><rect x="322" y="288" width="10" height="10" rx="3" fill="#d9d9d9" stroke="#999"/><rect x="216" y="312" width="9" height="9" rx="2" fill="#5a8" stroke="#5a8" stroke-width="3"/><text x="230" y="321" font-size="12" fill="#888">1</text><rect x="367" y="238" width="120" height="30" rx="5" fill="#77c6cc" stroke="#999" stroke-width="1"/><path d="M 457 238.5 H 482 Q 486.5 238.5 486.5 243.5 V 262.5 Q 486.5 267.5 482 267.5 H 457 Z" fill="#000" fill-opacity="0.05"/><line x1="457" y1="238.5" x2="457" y2="267.5" stroke="#000" stroke-opacity="0.1"/><text x="464" y="256" textLength="18" lengthAdjust="spacingAndGlyphs" font-family='"Liberation Sans", sans-serif' font-weight="bold" font-size="11.2" fill="#fff">abc</text><rect x="464" y="258.2" width="18.2" height="1.9" fill="#fff"/><text x="449" y="258" text-anchor="end" font-size="14" fill="#333">Input02</text><rect x="362" y="248" width="10" height="10" rx="3" fill="#d9d9d9" stroke="#999"/><rect x="487" y="278" width="100" height="30" rx="5" fill="#e2d96e" stroke="#999" stroke-width="1"/><path d="M 516.5 278.5 H 492 Q 487.5 278.5 487.5 283.5 V 302.5 Q 487.5 307.5 492 307.5 H 516.5 Z" fill="#000" fill-opacity="0.05"/><line x1="516.5" y1="278.5" x2="516.5" y2="307.5" stroke="#000" stroke-opacity="0.1"/><g fill="none" stroke="#fff" stroke-width="2.4" stroke-linejoin="miter"><path d="M 494.8 293 H 499.8 L 502.6 285.6 H 506.6"/><path d="M 499.8 293 L 502.6 300.8 H 506.6"/></g><g fill="#fff"><path d="M 505.6 281 L 509.8 285.6 L 505.6 290.2 Z"/><path d="M 505.6 296.2 L 509.8 300.8 L 505.6 305.4 Z"/></g><text x="525" y="298" font-size="14" fill="#333">switch</text><rect x="482" y="288" width="10" height="10" rx="3" fill="#d9d9d9" stroke="#999"/><rect x="582" y="281.5" width="10" height="10" rx="3" fill="#d9d9d9" stroke="#999"/><rect x="582" y="294.5" width="10" height="10" rx="3" fill="#d9d9d9" stroke="#999"/><rect x="677" y="258" width="160" height="30" rx="5" fill="#e2d96e" stroke="#999" stroke-width="1"/><path d="M 706.5 258.5 H 682 Q 677.5 258.5 677.5 263.5 V 282.5 Q 677.5 287.5 682 287.5 H 706.5 Z" fill="#000" fill-opacity="0.05"/><line x1="706.5" y1="258.5" x2="706.5" y2="287.5" stroke="#000" stroke-opacity="0.1"/><g fill="none" stroke="#fff" stroke-width="2.3"><path d="M 684.2 265.6 H 687.8 L 689.6 269.8"/><path d="M 684.2 279.8 H 688 L 693.2 265.6 H 696.6"/><path d="M 691.6 275.4 L 693.4 279.8 H 696.6"/></g><g fill="#fff"><path d="M 696 261.1 L 699.4 265.6 L 696 270.1 Z"/><path d="M 696 275.3 L 699.4 279.8 L 696 284.3 Z"/></g><text x="715" y="278" font-size="14" fill="#333">set msg.payload</text><rect x="672" y="268" width="10" height="10" rx="3" fill="#d9d9d9" stroke="#999"/><rect x="832" y="268" width="10" height="10" rx="3" fill="#d9d9d9" stroke="#999"/><rect x="677" y="298" width="160" height="30" rx="5" fill="#e2d96e" stroke="#999" stroke-width="1"/><path d="M 706.5 298.5 H 682 Q 677.5 298.5 677.5 303.5 V 322.5 Q 677.5 327.5 682 327.5 H 706.5 Z" fill="#000" fill-opacity="0.05"/><line x1="706.5" y1="298.5" x2="706.5" y2="327.5" stroke="#000" stroke-opacity="0.1"/><g fill="none" stroke="#fff" stroke-width="2.3"><path d="M 684.2 305.6 H 687.8 L 689.6 309.8"/><path d="M 684.2 319.8 H 688 L 693.2 305.6 H 696.6"/><path d="M 691.6 315.4 L 693.4 319.8 H 696.6"/></g><g fill="#fff"><path d="M 696 301.1 L 699.4 305.6 L 696 310.1 Z"/><path d="M 696 315.3 L 699.4 319.8 L 696 324.3 Z"/></g><text x="715" y="318" font-size="14" fill="#333">set msg.payload</text><rect x="672" y="308" width="10" height="10" rx="3" fill="#d9d9d9" stroke="#999"/><rect x="832" y="308" width="10" height="10" rx="3" fill="#d9d9d9" stroke="#999"/><rect x="907" y="278" width="120" height="30" rx="5" fill="#b0dfe3" stroke="#999" stroke-width="1"/><path d="M 936.5 278.5 H 912 Q 907.5 278.5 907.5 283.5 V 302.5 Q 907.5 307.5 912 307.5 H 936.5 Z" fill="#000" fill-opacity="0.05"/><line x1="936.5" y1="278.5" x2="936.5" y2="307.5" stroke="#000" stroke-opacity="0.1"/><rect x="914" y="286.8" width="18" height="12.2" rx="6.1" fill="#fff"/><circle cx="925.8" cy="292.9" r="4.3" fill="#a8d4d8"/><text x="945" y="298" font-size="14" fill="#333">Relay02</text><rect x="902" y="288" width="10" height="10" rx="3" fill="#d9d9d9" stroke="#999"/><rect x="1022" y="288" width="10" height="10" rx="3" fill="#d9d9d9" stroke="#999"/><rect x="916" y="312" width="9" height="9" rx="2" fill="#fff" stroke="#c00" stroke-width="3"/><text x="930" y="321" font-size="12" fill="#888">off</text><rect x="1127" y="278" width="120" height="30" rx="5" fill="#c6dbef" stroke="#999" stroke-width="1"/><path d="M 1217 278.5 H 1242 Q 1246.5 278.5 1246.5 283.5 V 302.5 Q 1246.5 307.5 1242 307.5 H 1217 Z" fill="#000" fill-opacity="0.05"/><line x1="1217" y1="278.5" x2="1217" y2="307.5" stroke="#000" stroke-opacity="0.1"/><g fill="#fff"><ellipse cx="1228.00" cy="285.40" rx="3.5" ry="2.4" transform="rotate(28 1228.00 285.40)"/><ellipse cx="1236.10" cy="285.40" rx="3.5" ry="2.4" transform="rotate(-28 1236.10 285.40)"/><ellipse cx="1231.90" cy="289.80" rx="2.3" ry="1.2"/><ellipse cx="1227.40" cy="290.50" rx="2.0" ry="1.0" transform="rotate(-48 1227.40 290.50)"/><ellipse cx="1236.60" cy="290.50" rx="2.0" ry="1.0" transform="rotate(48 1236.60 290.50)"/><ellipse cx="1229.00" cy="294.00" rx="2.5" ry="2.5"/><ellipse cx="1235.10" cy="294.00" rx="2.5" ry="2.5"/><ellipse cx="1225.00" cy="294.90" rx="1.15" ry="2.3"/><ellipse cx="1239.00" cy="294.90" rx="1.15" ry="2.3"/><ellipse cx="1232.05" cy="298.70" rx="2.5" ry="2.4"/><ellipse cx="1227.00" cy="299.30" rx="2.0" ry="2.4" transform="rotate(-35 1227.00 299.30)"/><ellipse cx="1237.10" cy="299.30" rx="2.0" ry="2.4" transform="rotate(35 1237.10 299.30)"/><ellipse cx="1232.00" cy="302.90" rx="2.5" ry="1.35"/></g><text x="1209" y="298" text-anchor="end" font-size="14" fill="#333" font-style="italic">GPIO22</text><rect x="1122" y="288" width="10" height="10" rx="3" fill="#d9d9d9" stroke="#999"/><rect x="1136" y="312" width="9" height="9" rx="2" fill="#5a8" stroke="#5a8" stroke-width="3"/><text x="1150" y="321" font-size="12" fill="#888">0</text><rect x="207" y="358" width="120" height="30" rx="5" fill="#c6dbef" stroke="#999" stroke-width="1"/><path d="M 236.5 358.5 H 212 Q 207.5 358.5 207.5 363.5 V 382.5 Q 207.5 387.5 212 387.5 H 236.5 Z" fill="#000" fill-opacity="0.05"/><line x1="236.5" y1="358.5" x2="236.5" y2="387.5" stroke="#000" stroke-opacity="0.1"/><g fill="#fff"><ellipse cx="218.00" cy="365.40" rx="3.5" ry="2.4" transform="rotate(28 218.00 365.40)"/><ellipse cx="226.10" cy="365.40" rx="3.5" ry="2.4" transform="rotate(-28 226.10 365.40)"/><ellipse cx="221.90" cy="369.80" rx="2.3" ry="1.2"/><ellipse cx="217.40" cy="370.50" rx="2.0" ry="1.0" transform="rotate(-48 217.40 370.50)"/><ellipse cx="226.60" cy="370.50" rx="2.0" ry="1.0" transform="rotate(48 226.60 370.50)"/><ellipse cx="219.00" cy="374.00" rx="2.5" ry="2.5"/><ellipse cx="225.10" cy="374.00" rx="2.5" ry="2.5"/><ellipse cx="215.00" cy="374.90" rx="1.15" ry="2.3"/><ellipse cx="229.00" cy="374.90" rx="1.15" ry="2.3"/><ellipse cx="222.05" cy="378.70" rx="2.5" ry="2.4"/><ellipse cx="217.00" cy="379.30" rx="2.0" ry="2.4" transform="rotate(-35 217.00 379.30)"/><ellipse cx="227.10" cy="379.30" rx="2.0" ry="2.4" transform="rotate(35 227.10 379.30)"/><ellipse cx="222.00" cy="382.90" rx="2.5" ry="1.35"/></g><text x="245" y="378" font-size="14" fill="#333" font-style="italic">GPIO24</text><rect x="322" y="368" width="10" height="10" rx="3" fill="#d9d9d9" stroke="#999"/><rect x="216" y="392" width="9" height="9" rx="2" fill="#5a8" stroke="#5a8" stroke-width="3"/><text x="230" y="401" font-size="12" fill="#888">1</text><rect x="367" y="318" width="120" height="30" rx="5" fill="#77c6cc" stroke="#999" stroke-width="1"/><path d="M 457 318.5 H 482 Q 486.5 318.5 486.5 323.5 V 342.5 Q 486.5 347.5 482 347.5 H 457 Z" fill="#000" fill-opacity="0.05"/><line x1="457" y1="318.5" x2="457" y2="347.5" stroke="#000" stroke-opacity="0.1"/><text x="464" y="336" textLength="18" lengthAdjust="spacingAndGlyphs" font-family='"Liberation Sans", sans-serif' font-weight="bold" font-size="11.2" fill="#fff">abc</text><rect x="464" y="338.2" width="18.2" height="1.9" fill="#fff"/><text x="449" y="338" text-anchor="end" font-size="14" fill="#333">Input03</text><rect x="362" y="328" width="10" height="10" rx="3" fill="#d9d9d9" stroke="#999"/><rect x="487" y="358" width="100" height="30" rx="5" fill="#e2d96e" stroke="#999" stroke-width="1"/><path d="M 516.5 358.5 H 492 Q 487.5 358.5 487.5 363.5 V 382.5 Q 487.5 387.5 492 387.5 H 516.5 Z" fill="#000" fill-opacity="0.05"/><line x1="516.5" y1="358.5" x2="516.5" y2="387.5" stroke="#000" stroke-opacity="0.1"/><g fill="none" stroke="#fff" stroke-width="2.4" stroke-linejoin="miter"><path d="M 494.8 373 H 499.8 L 502.6 365.6 H 506.6"/><path d="M 499.8 373 L 502.6 380.8 H 506.6"/></g><g fill="#fff"><path d="M 505.6 361 L 509.8 365.6 L 505.6 370.2 Z"/><path d="M 505.6 376.2 L 509.8 380.8 L 505.6 385.4 Z"/></g><text x="525" y="378" font-size="14" fill="#333">switch</text><rect x="482" y="368" width="10" height="10" rx="3" fill="#d9d9d9" stroke="#999"/><rect x="582" y="361.5" width="10" height="10" rx="3" fill="#d9d9d9" stroke="#999"/><rect x="582" y="374.5" width="10" height="10" rx="3" fill="#d9d9d9" stroke="#999"/><rect x="677" y="338" width="160" height="30" rx="5" fill="#e2d96e" stroke="#999" stroke-width="1"/><path d="M 706.5 338.5 H 682 Q 677.5 338.5 677.5 343.5 V 362.5 Q 677.5 367.5 682 367.5 H 706.5 Z" fill="#000" fill-opacity="0.05"/><line x1="706.5" y1="338.5" x2="706.5" y2="367.5" stroke="#000" stroke-opacity="0.1"/><g fill="none" stroke="#fff" stroke-width="2.3"><path d="M 684.2 345.6 H 687.8 L 689.6 349.8"/><path d="M 684.2 359.8 H 688 L 693.2 345.6 H 696.6"/><path d="M 691.6 355.4 L 693.4 359.8 H 696.6"/></g><g fill="#fff"><path d="M 696 341.1 L 699.4 345.6 L 696 350.1 Z"/><path d="M 696 355.3 L 699.4 359.8 L 696 364.3 Z"/></g><text x="715" y="358" font-size="14" fill="#333">set msg.payload</text><rect x="672" y="348" width="10" height="10" rx="3" fill="#d9d9d9" stroke="#999"/><rect x="832" y="348" width="10" height="10" rx="3" fill="#d9d9d9" stroke="#999"/><rect x="677" y="378" width="160" height="30" rx="5" fill="#e2d96e" stroke="#999" stroke-width="1"/><path d="M 706.5 378.5 H 682 Q 677.5 378.5 677.5 383.5 V 402.5 Q 677.5 407.5 682 407.5 H 706.5 Z" fill="#000" fill-opacity="0.05"/><line x1="706.5" y1="378.5" x2="706.5" y2="407.5" stroke="#000" stroke-opacity="0.1"/><g fill="none" stroke="#fff" stroke-width="2.3"><path d="M 684.2 385.6 H 687.8 L 689.6 389.8"/><path d="M 684.2 399.8 H 688 L 693.2 385.6 H 696.6"/><path d="M 691.6 395.4 L 693.4 399.8 H 696.6"/></g><g fill="#fff"><path d="M 696 381.1 L 699.4 385.6 L 696 390.1 Z"/><path d="M 696 395.3 L 699.4 399.8 L 696 404.3 Z"/></g><text x="715" y="398" font-size="14" fill="#333">set msg.payload</text><rect x="672" y="388" width="10" height="10" rx="3" fill="#d9d9d9" stroke="#999"/><rect x="832" y="388" width="10" height="10" rx="3" fill="#d9d9d9" stroke="#999"/><rect x="907" y="358" width="120" height="30" rx="5" fill="#b0dfe3" stroke="#999" stroke-width="1"/><path d="M 936.5 358.5 H 912 Q 907.5 358.5 907.5 363.5 V 382.5 Q 907.5 387.5 912 387.5 H 936.5 Z" fill="#000" fill-opacity="0.05"/><line x1="936.5" y1="358.5" x2="936.5" y2="387.5" stroke="#000" stroke-opacity="0.1"/><rect x="914" y="366.8" width="18" height="12.2" rx="6.1" fill="#fff"/><circle cx="925.8" cy="372.9" r="4.3" fill="#a8d4d8"/><text x="945" y="378" font-size="14" fill="#333">Relay03</text><rect x="902" y="368" width="10" height="10" rx="3" fill="#d9d9d9" stroke="#999"/><rect x="1022" y="368" width="10" height="10" rx="3" fill="#d9d9d9" stroke="#999"/><rect x="916" y="392" width="9" height="9" rx="2" fill="#fff" stroke="#c00" stroke-width="3"/><text x="930" y="401" font-size="12" fill="#888">off</text><rect x="1127" y="358" width="120" height="30" rx="5" fill="#c6dbef" stroke="#999" stroke-width="1"/><path d="M 1217 358.5 H 1242 Q 1246.5 358.5 1246.5 363.5 V 382.5 Q 1246.5 387.5 1242 387.5 H 1217 Z" fill="#000" fill-opacity="0.05"/><line x1="1217" y1="358.5" x2="1217" y2="387.5" stroke="#000" stroke-opacity="0.1"/><g fill="#fff"><ellipse cx="1228.00" cy="365.40" rx="3.5" ry="2.4" transform="rotate(28 1228.00 365.40)"/><ellipse cx="1236.10" cy="365.40" rx="3.5" ry="2.4" transform="rotate(-28 1236.10 365.40)"/><ellipse cx="1231.90" cy="369.80" rx="2.3" ry="1.2"/><ellipse cx="1227.40" cy="370.50" rx="2.0" ry="1.0" transform="rotate(-48 1227.40 370.50)"/><ellipse cx="1236.60" cy="370.50" rx="2.0" ry="1.0" transform="rotate(48 1236.60 370.50)"/><ellipse cx="1229.00" cy="374.00" rx="2.5" ry="2.5"/><ellipse cx="1235.10" cy="374.00" rx="2.5" ry="2.5"/><ellipse cx="1225.00" cy="374.90" rx="1.15" ry="2.3"/><ellipse cx="1239.00" cy="374.90" rx="1.15" ry="2.3"/><ellipse cx="1232.05" cy="378.70" rx="2.5" ry="2.4"/><ellipse cx="1227.00" cy="379.30" rx="2.0" ry="2.4" transform="rotate(-35 1227.00 379.30)"/><ellipse cx="1237.10" cy="379.30" rx="2.0" ry="2.4" transform="rotate(35 1237.10 379.30)"/><ellipse cx="1232.00" cy="382.90" rx="2.5" ry="1.35"/></g><text x="1209" y="378" text-anchor="end" font-size="14" fill="#333" font-style="italic">GPIO17</text><rect x="1122" y="368" width="10" height="10" rx="3" fill="#d9d9d9" stroke="#999"/><rect x="1136" y="392" width="9" height="9" rx="2" fill="#5a8" stroke="#5a8" stroke-width="3"/><text x="1150" y="401" font-size="12" fill="#888">0</text><rect x="207" y="438" width="120" height="30" rx="5" fill="#c6dbef" stroke="#999" stroke-width="1"/><path d="M 236.5 438.5 H 212 Q 207.5 438.5 207.5 443.5 V 462.5 Q 207.5 467.5 212 467.5 H 236.5 Z" fill="#000" fill-opacity="0.05"/><line x1="236.5" y1="438.5" x2="236.5" y2="467.5" stroke="#000" stroke-opacity="0.1"/><g fill="#fff"><ellipse cx="218.00" cy="445.40" rx="3.5" ry="2.4" transform="rotate(28 218.00 445.40)"/><ellipse cx="226.10" cy="445.40" rx="3.5" ry="2.4" transform="rotate(-28 226.10 445.40)"/><ellipse cx="221.90" cy="449.80" rx="2.3" ry="1.2"/><ellipse cx="217.40" cy="450.50" rx="2.0" ry="1.0" transform="rotate(-48 217.40 450.50)"/><ellipse cx="226.60" cy="450.50" rx="2.0" ry="1.0" transform="rotate(48 226.60 450.50)"/><ellipse cx="219.00" cy="454.00" rx="2.5" ry="2.5"/><ellipse cx="225.10" cy="454.00" rx="2.5" ry="2.5"/><ellipse cx="215.00" cy="454.90" rx="1.15" ry="2.3"/><ellipse cx="229.00" cy="454.90" rx="1.15" ry="2.3"/><ellipse cx="222.05" cy="458.70" rx="2.5" ry="2.4"/><ellipse cx="217.00" cy="459.30" rx="2.0" ry="2.4" transform="rotate(-35 217.00 459.30)"/><ellipse cx="227.10" cy="459.30" rx="2.0" ry="2.4" transform="rotate(35 227.10 459.30)"/><ellipse cx="222.00" cy="462.90" rx="2.5" ry="1.35"/></g><text x="245" y="458" font-size="14" fill="#333" font-style="italic">GPIO25</text><rect x="322" y="448" width="10" height="10" rx="3" fill="#d9d9d9" stroke="#999"/><rect x="216" y="472" width="9" height="9" rx="2" fill="#5a8" stroke="#5a8" stroke-width="3"/><text x="230" y="481" font-size="12" fill="#888">1</text><rect x="367" y="398" width="120" height="30" rx="5" fill="#77c6cc" stroke="#999" stroke-width="1"/><path d="M 457 398.5 H 482 Q 486.5 398.5 486.5 403.5 V 422.5 Q 486.5 427.5 482 427.5 H 457 Z" fill="#000" fill-opacity="0.05"/><line x1="457" y1="398.5" x2="457" y2="427.5" stroke="#000" stroke-opacity="0.1"/><text x="464" y="416" textLength="18" lengthAdjust="spacingAndGlyphs" font-family='"Liberation Sans", sans-serif' font-weight="bold" font-size="11.2" fill="#fff">abc</text><rect x="464" y="418.2" width="18.2" height="1.9" fill="#fff"/><text x="449" y="418" text-anchor="end" font-size="14" fill="#333">Input04</text><rect x="362" y="408" width="10" height="10" rx="3" fill="#d9d9d9" stroke="#999"/><rect x="487" y="438" width="100" height="30" rx="5" fill="#e2d96e" stroke="#999" stroke-width="1"/><path d="M 516.5 438.5 H 492 Q 487.5 438.5 487.5 443.5 V 462.5 Q 487.5 467.5 492 467.5 H 516.5 Z" fill="#000" fill-opacity="0.05"/><line x1="516.5" y1="438.5" x2="516.5" y2="467.5" stroke="#000" stroke-opacity="0.1"/><g fill="none" stroke="#fff" stroke-width="2.4" stroke-linejoin="miter"><path d="M 494.8 453 H 499.8 L 502.6 445.6 H 506.6"/><path d="M 499.8 453 L 502.6 460.8 H 506.6"/></g><g fill="#fff"><path d="M 505.6 441 L 509.8 445.6 L 505.6 450.2 Z"/><path d="M 505.6 456.2 L 509.8 460.8 L 505.6 465.4 Z"/></g><text x="525" y="458" font-size="14" fill="#333">switch</text><rect x="482" y="448" width="10" height="10" rx="3" fill="#d9d9d9" stroke="#999"/><rect x="582" y="441.5" width="10" height="10" rx="3" fill="#d9d9d9" stroke="#999"/><rect x="582" y="454.5" width="10" height="10" rx="3" fill="#d9d9d9" stroke="#999"/><rect x="677" y="418" width="160" height="30" rx="5" fill="#e2d96e" stroke="#999" stroke-width="1"/><path d="M 706.5 418.5 H 682 Q 677.5 418.5 677.5 423.5 V 442.5 Q 677.5 447.5 682 447.5 H 706.5 Z" fill="#000" fill-opacity="0.05"/><line x1="706.5" y1="418.5" x2="706.5" y2="447.5" stroke="#000" stroke-opacity="0.1"/><g fill="none" stroke="#fff" stroke-width="2.3"><path d="M 684.2 425.6 H 687.8 L 689.6 429.8"/><path d="M 684.2 439.8 H 688 L 693.2 425.6 H 696.6"/><path d="M 691.6 435.4 L 693.4 439.8 H 696.6"/></g><g fill="#fff"><path d="M 696 421.1 L 699.4 425.6 L 696 430.1 Z"/><path d="M 696 435.3 L 699.4 439.8 L 696 444.3 Z"/></g><text x="715" y="438" font-size="14" fill="#333">set msg.payload</text><rect x="672" y="428" width="10" height="10" rx="3" fill="#d9d9d9" stroke="#999"/><rect x="832" y="428" width="10" height="10" rx="3" fill="#d9d9d9" stroke="#999"/><rect x="677" y="458" width="160" height="30" rx="5" fill="#e2d96e" stroke="#999" stroke-width="1"/><path d="M 706.5 458.5 H 682 Q 677.5 458.5 677.5 463.5 V 482.5 Q 677.5 487.5 682 487.5 H 706.5 Z" fill="#000" fill-opacity="0.05"/><line x1="706.5" y1="458.5" x2="706.5" y2="487.5" stroke="#000" stroke-opacity="0.1"/><g fill="none" stroke="#fff" stroke-width="2.3"><path d="M 684.2 465.6 H 687.8 L 689.6 469.8"/><path d="M 684.2 479.8 H 688 L 693.2 465.6 H 696.6"/><path d="M 691.6 475.4 L 693.4 479.8 H 696.6"/></g><g fill="#fff"><path d="M 696 461.1 L 699.4 465.6 L 696 470.1 Z"/><path d="M 696 475.3 L 699.4 479.8 L 696 484.3 Z"/></g><text x="715" y="478" font-size="14" fill="#333">set msg.payload</text><rect x="672" y="468" width="10" height="10" rx="3" fill="#d9d9d9" stroke="#999"/><rect x="832" y="468" width="10" height="10" rx="3" fill="#d9d9d9" stroke="#999"/><rect x="907" y="438" width="120" height="30" rx="5" fill="#b0dfe3" stroke="#999" stroke-width="1"/><path d="M 936.5 438.5 H 912 Q 907.5 438.5 907.5 443.5 V 462.5 Q 907.5 467.5 912 467.5 H 936.5 Z" fill="#000" fill-opacity="0.05"/><line x1="936.5" y1="438.5" x2="936.5" y2="467.5" stroke="#000" stroke-opacity="0.1"/><rect x="914" y="446.8" width="18" height="12.2" rx="6.1" fill="#fff"/><circle cx="925.8" cy="452.9" r="4.3" fill="#a8d4d8"/><text x="945" y="458" font-size="14" fill="#333">Relay04</text><rect x="902" y="448" width="10" height="10" rx="3" fill="#d9d9d9" stroke="#999"/><rect x="1022" y="448" width="10" height="10" rx="3" fill="#d9d9d9" stroke="#999"/><rect x="916" y="472" width="9" height="9" rx="2" fill="#fff" stroke="#c00" stroke-width="3"/><text x="930" y="481" font-size="12" fill="#888">off</text><rect x="1127" y="438" width="120" height="30" rx="5" fill="#c6dbef" stroke="#999" stroke-width="1"/><path d="M 1217 438.5 H 1242 Q 1246.5 438.5 1246.5 443.5 V 462.5 Q 1246.5 467.5 1242 467.5 H 1217 Z" fill="#000" fill-opacity="0.05"/><line x1="1217" y1="438.5" x2="1217" y2="467.5" stroke="#000" stroke-opacity="0.1"/><g fill="#fff"><ellipse cx="1228.00" cy="445.40" rx="3.5" ry="2.4" transform="rotate(28 1228.00 445.40)"/><ellipse cx="1236.10" cy="445.40" rx="3.5" ry="2.4" transform="rotate(-28 1236.10 445.40)"/><ellipse cx="1231.90" cy="449.80" rx="2.3" ry="1.2"/><ellipse cx="1227.40" cy="450.50" rx="2.0" ry="1.0" transform="rotate(-48 1227.40 450.50)"/><ellipse cx="1236.60" cy="450.50" rx="2.0" ry="1.0" transform="rotate(48 1236.60 450.50)"/><ellipse cx="1229.00" cy="454.00" rx="2.5" ry="2.5"/><ellipse cx="1235.10" cy="454.00" rx="2.5" ry="2.5"/><ellipse cx="1225.00" cy="454.90" rx="1.15" ry="2.3"/><ellipse cx="1239.00" cy="454.90" rx="1.15" ry="2.3"/><ellipse cx="1232.05" cy="458.70" rx="2.5" ry="2.4"/><ellipse cx="1227.00" cy="459.30" rx="2.0" ry="2.4" transform="rotate(-35 1227.00 459.30)"/><ellipse cx="1237.10" cy="459.30" rx="2.0" ry="2.4" transform="rotate(35 1237.10 459.30)"/><ellipse cx="1232.00" cy="462.90" rx="2.5" ry="1.35"/></g><text x="1209" y="458" text-anchor="end" font-size="14" fill="#333" font-style="italic">GPIO04</text><rect x="1122" y="448" width="10" height="10" rx="3" fill="#d9d9d9" stroke="#999"/><rect x="1136" y="472" width="9" height="9" rx="2" fill="#5a8" stroke="#5a8" stroke-width="3"/><text x="1150" y="481" font-size="12" fill="#888">0</text><rect x="207" y="518" width="120" height="30" rx="5" fill="#c6dbef" stroke="#999" stroke-width="1"/><path d="M 236.5 518.5 H 212 Q 207.5 518.5 207.5 523.5 V 542.5 Q 207.5 547.5 212 547.5 H 236.5 Z" fill="#000" fill-opacity="0.05"/><line x1="236.5" y1="518.5" x2="236.5" y2="547.5" stroke="#000" stroke-opacity="0.1"/><g fill="#fff"><ellipse cx="218.00" cy="525.40" rx="3.5" ry="2.4" transform="rotate(28 218.00 525.40)"/><ellipse cx="226.10" cy="525.40" rx="3.5" ry="2.4" transform="rotate(-28 226.10 525.40)"/><ellipse cx="221.90" cy="529.80" rx="2.3" ry="1.2"/><ellipse cx="217.40" cy="530.50" rx="2.0" ry="1.0" transform="rotate(-48 217.40 530.50)"/><ellipse cx="226.60" cy="530.50" rx="2.0" ry="1.0" transform="rotate(48 226.60 530.50)"/><ellipse cx="219.00" cy="534.00" rx="2.5" ry="2.5"/><ellipse cx="225.10" cy="534.00" rx="2.5" ry="2.5"/><ellipse cx="215.00" cy="534.90" rx="1.15" ry="2.3"/><ellipse cx="229.00" cy="534.90" rx="1.15" ry="2.3"/><ellipse cx="222.05" cy="538.70" rx="2.5" ry="2.4"/><ellipse cx="217.00" cy="539.30" rx="2.0" ry="2.4" transform="rotate(-35 217.00 539.30)"/><ellipse cx="227.10" cy="539.30" rx="2.0" ry="2.4" transform="rotate(35 227.10 539.30)"/><ellipse cx="222.00" cy="542.90" rx="2.5" ry="1.35"/></g><text x="245" y="538" font-size="14" fill="#333" font-style="italic">GPIO12</text><rect x="322" y="528" width="10" height="10" rx="3" fill="#d9d9d9" stroke="#999"/><rect x="216" y="552" width="9" height="9" rx="2" fill="#5a8" stroke="#5a8" stroke-width="3"/><text x="230" y="561" font-size="12" fill="#888">1</text><rect x="367" y="478" width="120" height="30" rx="5" fill="#77c6cc" stroke="#999" stroke-width="1"/><path d="M 457 478.5 H 482 Q 486.5 478.5 486.5 483.5 V 502.5 Q 486.5 507.5 482 507.5 H 457 Z" fill="#000" fill-opacity="0.05"/><line x1="457" y1="478.5" x2="457" y2="507.5" stroke="#000" stroke-opacity="0.1"/><text x="464" y="496" textLength="18" lengthAdjust="spacingAndGlyphs" font-family='"Liberation Sans", sans-serif' font-weight="bold" font-size="11.2" fill="#fff">abc</text><rect x="464" y="498.2" width="18.2" height="1.9" fill="#fff"/><text x="449" y="498" text-anchor="end" font-size="14" fill="#333">Input05</text><rect x="362" y="488" width="10" height="10" rx="3" fill="#d9d9d9" stroke="#999"/><rect x="487" y="518" width="100" height="30" rx="5" fill="#e2d96e" stroke="#999" stroke-width="1"/><path d="M 516.5 518.5 H 492 Q 487.5 518.5 487.5 523.5 V 542.5 Q 487.5 547.5 492 547.5 H 516.5 Z" fill="#000" fill-opacity="0.05"/><line x1="516.5" y1="518.5" x2="516.5" y2="547.5" stroke="#000" stroke-opacity="0.1"/><g fill="none" stroke="#fff" stroke-width="2.4" stroke-linejoin="miter"><path d="M 494.8 533 H 499.8 L 502.6 525.6 H 506.6"/><path d="M 499.8 533 L 502.6 540.8 H 506.6"/></g><g fill="#fff"><path d="M 505.6 521 L 509.8 525.6 L 505.6 530.2 Z"/><path d="M 505.6 536.2 L 509.8 540.8 L 505.6 545.4 Z"/></g><text x="525" y="538" font-size="14" fill="#333">switch</text><rect x="482" y="528" width="10" height="10" rx="3" fill="#d9d9d9" stroke="#999"/><rect x="582" y="521.5" width="10" height="10" rx="3" fill="#d9d9d9" stroke="#999"/><rect x="582" y="534.5" width="10" height="10" rx="3" fill="#d9d9d9" stroke="#999"/><rect x="677" y="498" width="160" height="30" rx="5" fill="#e2d96e" stroke="#999" stroke-width="1"/><path d="M 706.5 498.5 H 682 Q 677.5 498.5 677.5 503.5 V 522.5 Q 677.5 527.5 682 527.5 H 706.5 Z" fill="#000" fill-opacity="0.05"/><line x1="706.5" y1="498.5" x2="706.5" y2="527.5" stroke="#000" stroke-opacity="0.1"/><g fill="none" stroke="#fff" stroke-width="2.3"><path d="M 684.2 505.6 H 687.8 L 689.6 509.8"/><path d="M 684.2 519.8 H 688 L 693.2 505.6 H 696.6"/><path d="M 691.6 515.4 L 693.4 519.8 H 696.6"/></g><g fill="#fff"><path d="M 696 501.1 L 699.4 505.6 L 696 510.1 Z"/><path d="M 696 515.3 L 699.4 519.8 L 696 524.3 Z"/></g><text x="715" y="518" font-size="14" fill="#333">set msg.payload</text><rect x="672" y="508" width="10" height="10" rx="3" fill="#d9d9d9" stroke="#999"/><rect x="832" y="508" width="10" height="10" rx="3" fill="#d9d9d9" stroke="#999"/><rect x="677" y="538" width="160" height="30" rx="5" fill="#e2d96e" stroke="#999" stroke-width="1"/><path d="M 706.5 538.5 H 682 Q 677.5 538.5 677.5 543.5 V 562.5 Q 677.5 567.5 682 567.5 H 706.5 Z" fill="#000" fill-opacity="0.05"/><line x1="706.5" y1="538.5" x2="706.5" y2="567.5" stroke="#000" stroke-opacity="0.1"/><g fill="none" stroke="#fff" stroke-width="2.3"><path d="M 684.2 545.6 H 687.8 L 689.6 549.8"/><path d="M 684.2 559.8 H 688 L 693.2 545.6 H 696.6"/><path d="M 691.6 555.4 L 693.4 559.8 H 696.6"/></g><g fill="#fff"><path d="M 696 541.1 L 699.4 545.6 L 696 550.1 Z"/><path d="M 696 555.3 L 699.4 559.8 L 696 564.3 Z"/></g><text x="715" y="558" font-size="14" fill="#333">set msg.payload</text><rect x="672" y="548" width="10" height="10" rx="3" fill="#d9d9d9" stroke="#999"/><rect x="832" y="548" width="10" height="10" rx="3" fill="#d9d9d9" stroke="#999"/><rect x="907" y="518" width="120" height="30" rx="5" fill="#b0dfe3" stroke="#999" stroke-width="1"/><path d="M 936.5 518.5 H 912 Q 907.5 518.5 907.5 523.5 V 542.5 Q 907.5 547.5 912 547.5 H 936.5 Z" fill="#000" fill-opacity="0.05"/><line x1="936.5" y1="518.5" x2="936.5" y2="547.5" stroke="#000" stroke-opacity="0.1"/><rect x="914" y="526.8" width="18" height="12.2" rx="6.1" fill="#fff"/><circle cx="925.8" cy="532.9" r="4.3" fill="#a8d4d8"/><text x="945" y="538" font-size="14" fill="#333">Relay05</text><rect x="902" y="528" width="10" height="10" rx="3" fill="#d9d9d9" stroke="#999"/><rect x="1022" y="528" width="10" height="10" rx="3" fill="#d9d9d9" stroke="#999"/><rect x="916" y="552" width="9" height="9" rx="2" fill="#fff" stroke="#c00" stroke-width="3"/><text x="930" y="561" font-size="12" fill="#888">off</text><rect x="1127" y="518" width="120" height="30" rx="5" fill="#c6dbef" stroke="#999" stroke-width="1"/><path d="M 1217 518.5 H 1242 Q 1246.5 518.5 1246.5 523.5 V 542.5 Q 1246.5 547.5 1242 547.5 H 1217 Z" fill="#000" fill-opacity="0.05"/><line x1="1217" y1="518.5" x2="1217" y2="547.5" stroke="#000" stroke-opacity="0.1"/><g fill="#fff"><ellipse cx="1228.00" cy="525.40" rx="3.5" ry="2.4" transform="rotate(28 1228.00 525.40)"/><ellipse cx="1236.10" cy="525.40" rx="3.5" ry="2.4" transform="rotate(-28 1236.10 525.40)"/><ellipse cx="1231.90" cy="529.80" rx="2.3" ry="1.2"/><ellipse cx="1227.40" cy="530.50" rx="2.0" ry="1.0" transform="rotate(-48 1227.40 530.50)"/><ellipse cx="1236.60" cy="530.50" rx="2.0" ry="1.0" transform="rotate(48 1236.60 530.50)"/><ellipse cx="1229.00" cy="534.00" rx="2.5" ry="2.5"/><ellipse cx="1235.10" cy="534.00" rx="2.5" ry="2.5"/><ellipse cx="1225.00" cy="534.90" rx="1.15" ry="2.3"/><ellipse cx="1239.00" cy="534.90" rx="1.15" ry="2.3"/><ellipse cx="1232.05" cy="538.70" rx="2.5" ry="2.4"/><ellipse cx="1227.00" cy="539.30" rx="2.0" ry="2.4" transform="rotate(-35 1227.00 539.30)"/><ellipse cx="1237.10" cy="539.30" rx="2.0" ry="2.4" transform="rotate(35 1237.10 539.30)"/><ellipse cx="1232.00" cy="542.90" rx="2.5" ry="1.35"/></g><text x="1209" y="538" text-anchor="end" font-size="14" fill="#333" font-style="italic">GPIO06</text><rect x="1122" y="528" width="10" height="10" rx="3" fill="#d9d9d9" stroke="#999"/><rect x="1136" y="552" width="9" height="9" rx="2" fill="#5a8" stroke="#5a8" stroke-width="3"/><text x="1150" y="561" font-size="12" fill="#888">0</text><rect x="207" y="598" width="120" height="30" rx="5" fill="#c6dbef" stroke="#999" stroke-width="1"/><path d="M 236.5 598.5 H 212 Q 207.5 598.5 207.5 603.5 V 622.5 Q 207.5 627.5 212 627.5 H 236.5 Z" fill="#000" fill-opacity="0.05"/><line x1="236.5" y1="598.5" x2="236.5" y2="627.5" stroke="#000" stroke-opacity="0.1"/><g fill="#fff"><ellipse cx="218.00" cy="605.40" rx="3.5" ry="2.4" transform="rotate(28 218.00 605.40)"/><ellipse cx="226.10" cy="605.40" rx="3.5" ry="2.4" transform="rotate(-28 226.10 605.40)"/><ellipse cx="221.90" cy="609.80" rx="2.3" ry="1.2"/><ellipse cx="217.40" cy="610.50" rx="2.0" ry="1.0" transform="rotate(-48 217.40 610.50)"/><ellipse cx="226.60" cy="610.50" rx="2.0" ry="1.0" transform="rotate(48 226.60 610.50)"/><ellipse cx="219.00" cy="614.00" rx="2.5" ry="2.5"/><ellipse cx="225.10" cy="614.00" rx="2.5" ry="2.5"/><ellipse cx="215.00" cy="614.90" rx="1.15" ry="2.3"/><ellipse cx="229.00" cy="614.90" rx="1.15" ry="2.3"/><ellipse cx="222.05" cy="618.70" rx="2.5" ry="2.4"/><ellipse cx="217.00" cy="619.30" rx="2.0" ry="2.4" transform="rotate(-35 217.00 619.30)"/><ellipse cx="227.10" cy="619.30" rx="2.0" ry="2.4" transform="rotate(35 227.10 619.30)"/><ellipse cx="222.00" cy="622.90" rx="2.5" ry="1.35"/></g><text x="245" y="618" font-size="14" fill="#333" font-style="italic">GPIO16</text><rect x="322" y="608" width="10" height="10" rx="3" fill="#d9d9d9" stroke="#999"/><rect x="216" y="632" width="9" height="9" rx="2" fill="#5a8" stroke="#5a8" stroke-width="3"/><text x="230" y="641" font-size="12" fill="#888">1</text><rect x="367" y="558" width="120" height="30" rx="5" fill="#77c6cc" stroke="#999" stroke-width="1"/><path d="M 457 558.5 H 482 Q 486.5 558.5 486.5 563.5 V 582.5 Q 486.5 587.5 482 587.5 H 457 Z" fill="#000" fill-opacity="0.05"/><line x1="457" y1="558.5" x2="457" y2="587.5" stroke="#000" stroke-opacity="0.1"/><text x="464" y="576" textLength="18" lengthAdjust="spacingAndGlyphs" font-family='"Liberation Sans", sans-serif' font-weight="bold" font-size="11.2" fill="#fff">abc</text><rect x="464" y="578.2" width="18.2" height="1.9" fill="#fff"/><text x="449" y="578" text-anchor="end" font-size="14" fill="#333">Input06</text><rect x="362" y="568" width="10" height="10" rx="3" fill="#d9d9d9" stroke="#999"/><rect x="487" y="598" width="100" height="30" rx="5" fill="#e2d96e" stroke="#999" stroke-width="1"/><path d="M 516.5 598.5 H 492 Q 487.5 598.5 487.5 603.5 V 622.5 Q 487.5 627.5 492 627.5 H 516.5 Z" fill="#000" fill-opacity="0.05"/><line x1="516.5" y1="598.5" x2="516.5" y2="627.5" stroke="#000" stroke-opacity="0.1"/><g fill="none" stroke="#fff" stroke-width="2.4" stroke-linejoin="miter"><path d="M 494.8 613 H 499.8 L 502.6 605.6 H 506.6"/><path d="M 499.8 613 L 502.6 620.8 H 506.6"/></g><g fill="#fff"><path d="M 505.6 601 L 509.8 605.6 L 505.6 610.2 Z"/><path d="M 505.6 616.2 L 509.8 620.8 L 505.6 625.4 Z"/></g><text x="525" y="618" font-size="14" fill="#333">switch</text><rect x="482" y="608" width="10" height="10" rx="3" fill="#d9d9d9" stroke="#999"/><rect x="582" y="601.5" width="10" height="10" rx="3" fill="#d9d9d9" stroke="#999"/><rect x="582" y="614.5" width="10" height="10" rx="3" fill="#d9d9d9" stroke="#999"/><rect x="677" y="578" width="160" height="30" rx="5" fill="#e2d96e" stroke="#999" stroke-width="1"/><path d="M 706.5 578.5 H 682 Q 677.5 578.5 677.5 583.5 V 602.5 Q 677.5 607.5 682 607.5 H 706.5 Z" fill="#000" fill-opacity="0.05"/><line x1="706.5" y1="578.5" x2="706.5" y2="607.5" stroke="#000" stroke-opacity="0.1"/><g fill="none" stroke="#fff" stroke-width="2.3"><path d="M 684.2 585.6 H 687.8 L 689.6 589.8"/><path d="M 684.2 599.8 H 688 L 693.2 585.6 H 696.6"/><path d="M 691.6 595.4 L 693.4 599.8 H 696.6"/></g><g fill="#fff"><path d="M 696 581.1 L 699.4 585.6 L 696 590.1 Z"/><path d="M 696 595.3 L 699.4 599.8 L 696 604.3 Z"/></g><text x="715" y="598" font-size="14" fill="#333">set msg.payload</text><rect x="672" y="588" width="10" height="10" rx="3" fill="#d9d9d9" stroke="#999"/><rect x="832" y="588" width="10" height="10" rx="3" fill="#d9d9d9" stroke="#999"/><rect x="677" y="618" width="160" height="30" rx="5" fill="#e2d96e" stroke="#999" stroke-width="1"/><path d="M 706.5 618.5 H 682 Q 677.5 618.5 677.5 623.5 V 642.5 Q 677.5 647.5 682 647.5 H 706.5 Z" fill="#000" fill-opacity="0.05"/><line x1="706.5" y1="618.5" x2="706.5" y2="647.5" stroke="#000" stroke-opacity="0.1"/><g fill="none" stroke="#fff" stroke-width="2.3"><path d="M 684.2 625.6 H 687.8 L 689.6 629.8"/><path d="M 684.2 639.8 H 688 L 693.2 625.6 H 696.6"/><path d="M 691.6 635.4 L 693.4 639.8 H 696.6"/></g><g fill="#fff"><path d="M 696 621.1 L 699.4 625.6 L 696 630.1 Z"/><path d="M 696 635.3 L 699.4 639.8 L 696 644.3 Z"/></g><text x="715" y="638" font-size="14" fill="#333">set msg.payload</text><rect x="672" y="628" width="10" height="10" rx="3" fill="#d9d9d9" stroke="#999"/><rect x="832" y="628" width="10" height="10" rx="3" fill="#d9d9d9" stroke="#999"/><rect x="907" y="598" width="120" height="30" rx="5" fill="#b0dfe3" stroke="#999" stroke-width="1"/><path d="M 936.5 598.5 H 912 Q 907.5 598.5 907.5 603.5 V 622.5 Q 907.5 627.5 912 627.5 H 936.5 Z" fill="#000" fill-opacity="0.05"/><line x1="936.5" y1="598.5" x2="936.5" y2="627.5" stroke="#000" stroke-opacity="0.1"/><rect x="914" y="606.8" width="18" height="12.2" rx="6.1" fill="#fff"/><circle cx="925.8" cy="612.9" r="4.3" fill="#a8d4d8"/><text x="945" y="618" font-size="14" fill="#333">Relay06</text><rect x="902" y="608" width="10" height="10" rx="3" fill="#d9d9d9" stroke="#999"/><rect x="1022" y="608" width="10" height="10" rx="3" fill="#d9d9d9" stroke="#999"/><rect x="916" y="632" width="9" height="9" rx="2" fill="#fff" stroke="#c00" stroke-width="3"/><text x="930" y="641" font-size="12" fill="#888">off</text><rect x="1127" y="598" width="120" height="30" rx="5" fill="#c6dbef" stroke="#999" stroke-width="1"/><path d="M 1217 598.5 H 1242 Q 1246.5 598.5 1246.5 603.5 V 622.5 Q 1246.5 627.5 1242 627.5 H 1217 Z" fill="#000" fill-opacity="0.05"/><line x1="1217" y1="598.5" x2="1217" y2="627.5" stroke="#000" stroke-opacity="0.1"/><g fill="#fff"><ellipse cx="1228.00" cy="605.40" rx="3.5" ry="2.4" transform="rotate(28 1228.00 605.40)"/><ellipse cx="1236.10" cy="605.40" rx="3.5" ry="2.4" transform="rotate(-28 1236.10 605.40)"/><ellipse cx="1231.90" cy="609.80" rx="2.3" ry="1.2"/><ellipse cx="1227.40" cy="610.50" rx="2.0" ry="1.0" transform="rotate(-48 1227.40 610.50)"/><ellipse cx="1236.60" cy="610.50" rx="2.0" ry="1.0" transform="rotate(48 1236.60 610.50)"/><ellipse cx="1229.00" cy="614.00" rx="2.5" ry="2.5"/><ellipse cx="1235.10" cy="614.00" rx="2.5" ry="2.5"/><ellipse cx="1225.00" cy="614.90" rx="1.15" ry="2.3"/><ellipse cx="1239.00" cy="614.90" rx="1.15" ry="2.3"/><ellipse cx="1232.05" cy="618.70" rx="2.5" ry="2.4"/><ellipse cx="1227.00" cy="619.30" rx="2.0" ry="2.4" transform="rotate(-35 1227.00 619.30)"/><ellipse cx="1237.10" cy="619.30" rx="2.0" ry="2.4" transform="rotate(35 1237.10 619.30)"/><ellipse cx="1232.00" cy="622.90" rx="2.5" ry="1.35"/></g><text x="1209" y="618" text-anchor="end" font-size="14" fill="#333" font-style="italic">GPIO13</text><rect x="1122" y="608" width="10" height="10" rx="3" fill="#d9d9d9" stroke="#999"/><rect x="1136" y="632" width="9" height="9" rx="2" fill="#5a8" stroke="#5a8" stroke-width="3"/><text x="1150" y="641" font-size="12" fill="#888">0</text><rect x="207" y="678" width="120" height="30" rx="5" fill="#c6dbef" stroke="#999" stroke-width="1"/><path d="M 236.5 678.5 H 212 Q 207.5 678.5 207.5 683.5 V 702.5 Q 207.5 707.5 212 707.5 H 236.5 Z" fill="#000" fill-opacity="0.05"/><line x1="236.5" y1="678.5" x2="236.5" y2="707.5" stroke="#000" stroke-opacity="0.1"/><g fill="#fff"><ellipse cx="218.00" cy="685.40" rx="3.5" ry="2.4" transform="rotate(28 218.00 685.40)"/><ellipse cx="226.10" cy="685.40" rx="3.5" ry="2.4" transform="rotate(-28 226.10 685.40)"/><ellipse cx="221.90" cy="689.80" rx="2.3" ry="1.2"/><ellipse cx="217.40" cy="690.50" rx="2.0" ry="1.0" transform="rotate(-48 217.40 690.50)"/><ellipse cx="226.60" cy="690.50" rx="2.0" ry="1.0" transform="rotate(48 226.60 690.50)"/><ellipse cx="219.00" cy="694.00" rx="2.5" ry="2.5"/><ellipse cx="225.10" cy="694.00" rx="2.5" ry="2.5"/><ellipse cx="215.00" cy="694.90" rx="1.15" ry="2.3"/><ellipse cx="229.00" cy="694.90" rx="1.15" ry="2.3"/><ellipse cx="222.05" cy="698.70" rx="2.5" ry="2.4"/><ellipse cx="217.00" cy="699.30" rx="2.0" ry="2.4" transform="rotate(-35 217.00 699.30)"/><ellipse cx="227.10" cy="699.30" rx="2.0" ry="2.4" transform="rotate(35 227.10 699.30)"/><ellipse cx="222.00" cy="702.90" rx="2.5" ry="1.35"/></g><text x="245" y="698" font-size="14" fill="#333" font-style="italic">GPIO20</text><rect x="322" y="688" width="10" height="10" rx="3" fill="#d9d9d9" stroke="#999"/><rect x="216" y="712" width="9" height="9" rx="2" fill="#5a8" stroke="#5a8" stroke-width="3"/><text x="230" y="721" font-size="12" fill="#888">1</text><rect x="367" y="638" width="120" height="30" rx="5" fill="#77c6cc" stroke="#999" stroke-width="1"/><path d="M 457 638.5 H 482 Q 486.5 638.5 486.5 643.5 V 662.5 Q 486.5 667.5 482 667.5 H 457 Z" fill="#000" fill-opacity="0.05"/><line x1="457" y1="638.5" x2="457" y2="667.5" stroke="#000" stroke-opacity="0.1"/><text x="464" y="656" textLength="18" lengthAdjust="spacingAndGlyphs" font-family='"Liberation Sans", sans-serif' font-weight="bold" font-size="11.2" fill="#fff">abc</text><rect x="464" y="658.2" width="18.2" height="1.9" fill="#fff"/><text x="449" y="658" text-anchor="end" font-size="14" fill="#333">Input07</text><rect x="362" y="648" width="10" height="10" rx="3" fill="#d9d9d9" stroke="#999"/><rect x="487" y="678" width="100" height="30" rx="5" fill="#e2d96e" stroke="#999" stroke-width="1"/><path d="M 516.5 678.5 H 492 Q 487.5 678.5 487.5 683.5 V 702.5 Q 487.5 707.5 492 707.5 H 516.5 Z" fill="#000" fill-opacity="0.05"/><line x1="516.5" y1="678.5" x2="516.5" y2="707.5" stroke="#000" stroke-opacity="0.1"/><g fill="none" stroke="#fff" stroke-width="2.4" stroke-linejoin="miter"><path d="M 494.8 693 H 499.8 L 502.6 685.6 H 506.6"/><path d="M 499.8 693 L 502.6 700.8 H 506.6"/></g><g fill="#fff"><path d="M 505.6 681 L 509.8 685.6 L 505.6 690.2 Z"/><path d="M 505.6 696.2 L 509.8 700.8 L 505.6 705.4 Z"/></g><text x="525" y="698" font-size="14" fill="#333">switch</text><rect x="482" y="688" width="10" height="10" rx="3" fill="#d9d9d9" stroke="#999"/><rect x="582" y="681.5" width="10" height="10" rx="3" fill="#d9d9d9" stroke="#999"/><rect x="582" y="694.5" width="10" height="10" rx="3" fill="#d9d9d9" stroke="#999"/><rect x="677" y="658" width="160" height="30" rx="5" fill="#e2d96e" stroke="#999" stroke-width="1"/><path d="M 706.5 658.5 H 682 Q 677.5 658.5 677.5 663.5 V 682.5 Q 677.5 687.5 682 687.5 H 706.5 Z" fill="#000" fill-opacity="0.05"/><line x1="706.5" y1="658.5" x2="706.5" y2="687.5" stroke="#000" stroke-opacity="0.1"/><g fill="none" stroke="#fff" stroke-width="2.3"><path d="M 684.2 665.6 H 687.8 L 689.6 669.8"/><path d="M 684.2 679.8 H 688 L 693.2 665.6 H 696.6"/><path d="M 691.6 675.4 L 693.4 679.8 H 696.6"/></g><g fill="#fff"><path d="M 696 661.1 L 699.4 665.6 L 696 670.1 Z"/><path d="M 696 675.3 L 699.4 679.8 L 696 684.3 Z"/></g><text x="715" y="678" font-size="14" fill="#333">set msg.payload</text><rect x="672" y="668" width="10" height="10" rx="3" fill="#d9d9d9" stroke="#999"/><rect x="832" y="668" width="10" height="10" rx="3" fill="#d9d9d9" stroke="#999"/><rect x="677" y="698" width="160" height="30" rx="5" fill="#e2d96e" stroke="#999" stroke-width="1"/><path d="M 706.5 698.5 H 682 Q 677.5 698.5 677.5 703.5 V 722.5 Q 677.5 727.5 682 727.5 H 706.5 Z" fill="#000" fill-opacity="0.05"/><line x1="706.5" y1="698.5" x2="706.5" y2="727.5" stroke="#000" stroke-opacity="0.1"/><g fill="none" stroke="#fff" stroke-width="2.3"><path d="M 684.2 705.6 H 687.8 L 689.6 709.8"/><path d="M 684.2 719.8 H 688 L 693.2 705.6 H 696.6"/><path d="M 691.6 715.4 L 693.4 719.8 H 696.6"/></g><g fill="#fff"><path d="M 696 701.1 L 699.4 705.6 L 696 710.1 Z"/><path d="M 696 715.3 L 699.4 719.8 L 696 724.3 Z"/></g><text x="715" y="718" font-size="14" fill="#333">set msg.payload</text><rect x="672" y="708" width="10" height="10" rx="3" fill="#d9d9d9" stroke="#999"/><rect x="832" y="708" width="10" height="10" rx="3" fill="#d9d9d9" stroke="#999"/><rect x="907" y="678" width="120" height="30" rx="5" fill="#b0dfe3" stroke="#999" stroke-width="1"/><path d="M 936.5 678.5 H 912 Q 907.5 678.5 907.5 683.5 V 702.5 Q 907.5 707.5 912 707.5 H 936.5 Z" fill="#000" fill-opacity="0.05"/><line x1="936.5" y1="678.5" x2="936.5" y2="707.5" stroke="#000" stroke-opacity="0.1"/><rect x="914" y="686.8" width="18" height="12.2" rx="6.1" fill="#fff"/><circle cx="925.8" cy="692.9" r="4.3" fill="#a8d4d8"/><text x="945" y="698" font-size="14" fill="#333">Relay07</text><rect x="902" y="688" width="10" height="10" rx="3" fill="#d9d9d9" stroke="#999"/><rect x="1022" y="688" width="10" height="10" rx="3" fill="#d9d9d9" stroke="#999"/><rect x="916" y="712" width="9" height="9" rx="2" fill="#fff" stroke="#c00" stroke-width="3"/><text x="930" y="721" font-size="12" fill="#888">off</text><rect x="1127" y="678" width="120" height="30" rx="5" fill="#c6dbef" stroke="#999" stroke-width="1"/><path d="M 1217 678.5 H 1242 Q 1246.5 678.5 1246.5 683.5 V 702.5 Q 1246.5 707.5 1242 707.5 H 1217 Z" fill="#000" fill-opacity="0.05"/><line x1="1217" y1="678.5" x2="1217" y2="707.5" stroke="#000" stroke-opacity="0.1"/><g fill="#fff"><ellipse cx="1228.00" cy="685.40" rx="3.5" ry="2.4" transform="rotate(28 1228.00 685.40)"/><ellipse cx="1236.10" cy="685.40" rx="3.5" ry="2.4" transform="rotate(-28 1236.10 685.40)"/><ellipse cx="1231.90" cy="689.80" rx="2.3" ry="1.2"/><ellipse cx="1227.40" cy="690.50" rx="2.0" ry="1.0" transform="rotate(-48 1227.40 690.50)"/><ellipse cx="1236.60" cy="690.50" rx="2.0" ry="1.0" transform="rotate(48 1236.60 690.50)"/><ellipse cx="1229.00" cy="694.00" rx="2.5" ry="2.5"/><ellipse cx="1235.10" cy="694.00" rx="2.5" ry="2.5"/><ellipse cx="1225.00" cy="694.90" rx="1.15" ry="2.3"/><ellipse cx="1239.00" cy="694.90" rx="1.15" ry="2.3"/><ellipse cx="1232.05" cy="698.70" rx="2.5" ry="2.4"/><ellipse cx="1227.00" cy="699.30" rx="2.0" ry="2.4" transform="rotate(-35 1227.00 699.30)"/><ellipse cx="1237.10" cy="699.30" rx="2.0" ry="2.4" transform="rotate(35 1237.10 699.30)"/><ellipse cx="1232.00" cy="702.90" rx="2.5" ry="1.35"/></g><text x="1209" y="698" text-anchor="end" font-size="14" fill="#333" font-style="italic">GPIO19</text><rect x="1122" y="688" width="10" height="10" rx="3" fill="#d9d9d9" stroke="#999"/><rect x="1136" y="712" width="9" height="9" rx="2" fill="#5a8" stroke="#5a8" stroke-width="3"/><text x="1150" y="721" font-size="12" fill="#888">0</text><rect x="207" y="758" width="120" height="30" rx="5" fill="#c6dbef" stroke="#999" stroke-width="1"/><path d="M 236.5 758.5 H 212 Q 207.5 758.5 207.5 763.5 V 782.5 Q 207.5 787.5 212 787.5 H 236.5 Z" fill="#000" fill-opacity="0.05"/><line x1="236.5" y1="758.5" x2="236.5" y2="787.5" stroke="#000" stroke-opacity="0.1"/><g fill="#fff"><ellipse cx="218.00" cy="765.40" rx="3.5" ry="2.4" transform="rotate(28 218.00 765.40)"/><ellipse cx="226.10" cy="765.40" rx="3.5" ry="2.4" transform="rotate(-28 226.10 765.40)"/><ellipse cx="221.90" cy="769.80" rx="2.3" ry="1.2"/><ellipse cx="217.40" cy="770.50" rx="2.0" ry="1.0" transform="rotate(-48 217.40 770.50)"/><ellipse cx="226.60" cy="770.50" rx="2.0" ry="1.0" transform="rotate(48 226.60 770.50)"/><ellipse cx="219.00" cy="774.00" rx="2.5" ry="2.5"/><ellipse cx="225.10" cy="774.00" rx="2.5" ry="2.5"/><ellipse cx="215.00" cy="774.90" rx="1.15" ry="2.3"/><ellipse cx="229.00" cy="774.90" rx="1.15" ry="2.3"/><ellipse cx="222.05" cy="778.70" rx="2.5" ry="2.4"/><ellipse cx="217.00" cy="779.30" rx="2.0" ry="2.4" transform="rotate(-35 217.00 779.30)"/><ellipse cx="227.10" cy="779.30" rx="2.0" ry="2.4" transform="rotate(35 227.10 779.30)"/><ellipse cx="222.00" cy="782.90" rx="2.5" ry="1.35"/></g><text x="245" y="778" font-size="14" fill="#333" font-style="italic">GPIO21</text><rect x="322" y="768" width="10" height="10" rx="3" fill="#d9d9d9" stroke="#999"/><rect x="216" y="792" width="9" height="9" rx="2" fill="#5a8" stroke="#5a8" stroke-width="3"/><text x="230" y="801" font-size="12" fill="#888">1</text><rect x="367" y="718" width="120" height="30" rx="5" fill="#77c6cc" stroke="#999" stroke-width="1"/><path d="M 457 718.5 H 482 Q 486.5 718.5 486.5 723.5 V 742.5 Q 486.5 747.5 482 747.5 H 457 Z" fill="#000" fill-opacity="0.05"/><line x1="457" y1="718.5" x2="457" y2="747.5" stroke="#000" stroke-opacity="0.1"/><text x="464" y="736" textLength="18" lengthAdjust="spacingAndGlyphs" font-family='"Liberation Sans", sans-serif' font-weight="bold" font-size="11.2" fill="#fff">abc</text><rect x="464" y="738.2" width="18.2" height="1.9" fill="#fff"/><text x="449" y="738" text-anchor="end" font-size="14" fill="#333">Input08</text><rect x="362" y="728" width="10" height="10" rx="3" fill="#d9d9d9" stroke="#999"/><rect x="487" y="758" width="100" height="30" rx="5" fill="#e2d96e" stroke="#999" stroke-width="1"/><path d="M 516.5 758.5 H 492 Q 487.5 758.5 487.5 763.5 V 782.5 Q 487.5 787.5 492 787.5 H 516.5 Z" fill="#000" fill-opacity="0.05"/><line x1="516.5" y1="758.5" x2="516.5" y2="787.5" stroke="#000" stroke-opacity="0.1"/><g fill="none" stroke="#fff" stroke-width="2.4" stroke-linejoin="miter"><path d="M 494.8 773 H 499.8 L 502.6 765.6 H 506.6"/><path d="M 499.8 773 L 502.6 780.8 H 506.6"/></g><g fill="#fff"><path d="M 505.6 761 L 509.8 765.6 L 505.6 770.2 Z"/><path d="M 505.6 776.2 L 509.8 780.8 L 505.6 785.4 Z"/></g><text x="525" y="778" font-size="14" fill="#333">switch</text><rect x="482" y="768" width="10" height="10" rx="3" fill="#d9d9d9" stroke="#999"/><rect x="582" y="761.5" width="10" height="10" rx="3" fill="#d9d9d9" stroke="#999"/><rect x="582" y="774.5" width="10" height="10" rx="3" fill="#d9d9d9" stroke="#999"/><rect x="677" y="738" width="160" height="30" rx="5" fill="#e2d96e" stroke="#999" stroke-width="1"/><path d="M 706.5 738.5 H 682 Q 677.5 738.5 677.5 743.5 V 762.5 Q 677.5 767.5 682 767.5 H 706.5 Z" fill="#000" fill-opacity="0.05"/><line x1="706.5" y1="738.5" x2="706.5" y2="767.5" stroke="#000" stroke-opacity="0.1"/><g fill="none" stroke="#fff" stroke-width="2.3"><path d="M 684.2 745.6 H 687.8 L 689.6 749.8"/><path d="M 684.2 759.8 H 688 L 693.2 745.6 H 696.6"/><path d="M 691.6 755.4 L 693.4 759.8 H 696.6"/></g><g fill="#fff"><path d="M 696 741.1 L 699.4 745.6 L 696 750.1 Z"/><path d="M 696 755.3 L 699.4 759.8 L 696 764.3 Z"/></g><text x="715" y="758" font-size="14" fill="#333">set msg.payload</text><rect x="672" y="748" width="10" height="10" rx="3" fill="#d9d9d9" stroke="#999"/><rect x="832" y="748" width="10" height="10" rx="3" fill="#d9d9d9" stroke="#999"/><rect x="677" y="778" width="160" height="30" rx="5" fill="#e2d96e" stroke="#999" stroke-width="1"/><path d="M 706.5 778.5 H 682 Q 677.5 778.5 677.5 783.5 V 802.5 Q 677.5 807.5 682 807.5 H 706.5 Z" fill="#000" fill-opacity="0.05"/><line x1="706.5" y1="778.5" x2="706.5" y2="807.5" stroke="#000" stroke-opacity="0.1"/><g fill="none" stroke="#fff" stroke-width="2.3"><path d="M 684.2 785.6 H 687.8 L 689.6 789.8"/><path d="M 684.2 799.8 H 688 L 693.2 785.6 H 696.6"/><path d="M 691.6 795.4 L 693.4 799.8 H 696.6"/></g><g fill="#fff"><path d="M 696 781.1 L 699.4 785.6 L 696 790.1 Z"/><path d="M 696 795.3 L 699.4 799.8 L 696 804.3 Z"/></g><text x="715" y="798" font-size="14" fill="#333">set msg.payload</text><rect x="672" y="788" width="10" height="10" rx="3" fill="#d9d9d9" stroke="#999"/><rect x="832" y="788" width="10" height="10" rx="3" fill="#d9d9d9" stroke="#999"/><rect x="907" y="758" width="120" height="30" rx="5" fill="#b0dfe3" stroke="#999" stroke-width="1"/><path d="M 936.5 758.5 H 912 Q 907.5 758.5 907.5 763.5 V 782.5 Q 907.5 787.5 912 787.5 H 936.5 Z" fill="#000" fill-opacity="0.05"/><line x1="936.5" y1="758.5" x2="936.5" y2="787.5" stroke="#000" stroke-opacity="0.1"/><rect x="914" y="766.8" width="18" height="12.2" rx="6.1" fill="#fff"/><circle cx="925.8" cy="772.9" r="4.3" fill="#a8d4d8"/><text x="945" y="778" font-size="14" fill="#333">Relay08</text><rect x="902" y="768" width="10" height="10" rx="3" fill="#d9d9d9" stroke="#999"/><rect x="1022" y="768" width="10" height="10" rx="3" fill="#d9d9d9" stroke="#999"/><rect x="916" y="792" width="9" height="9" rx="2" fill="#fff" stroke="#c00" stroke-width="3"/><text x="930" y="801" font-size="12" fill="#888">off</text><rect x="1127" y="758" width="120" height="30" rx="5" fill="#c6dbef" stroke="#999" stroke-width="1"/><path d="M 1217 758.5 H 1242 Q 1246.5 758.5 1246.5 763.5 V 782.5 Q 1246.5 787.5 1242 787.5 H 1217 Z" fill="#000" fill-opacity="0.05"/><line x1="1217" y1="758.5" x2="1217" y2="787.5" stroke="#000" stroke-opacity="0.1"/><g fill="#fff"><ellipse cx="1228.00" cy="765.40" rx="3.5" ry="2.4" transform="rotate(28 1228.00 765.40)"/><ellipse cx="1236.10" cy="765.40" rx="3.5" ry="2.4" transform="rotate(-28 1236.10 765.40)"/><ellipse cx="1231.90" cy="769.80" rx="2.3" ry="1.2"/><ellipse cx="1227.40" cy="770.50" rx="2.0" ry="1.0" transform="rotate(-48 1227.40 770.50)"/><ellipse cx="1236.60" cy="770.50" rx="2.0" ry="1.0" transform="rotate(48 1236.60 770.50)"/><ellipse cx="1229.00" cy="774.00" rx="2.5" ry="2.5"/><ellipse cx="1235.10" cy="774.00" rx="2.5" ry="2.5"/><ellipse cx="1225.00" cy="774.90" rx="1.15" ry="2.3"/><ellipse cx="1239.00" cy="774.90" rx="1.15" ry="2.3"/><ellipse cx="1232.05" cy="778.70" rx="2.5" ry="2.4"/><ellipse cx="1227.00" cy="779.30" rx="2.0" ry="2.4" transform="rotate(-35 1227.00 779.30)"/><ellipse cx="1237.10" cy="779.30" rx="2.0" ry="2.4" transform="rotate(35 1237.10 779.30)"/><ellipse cx="1232.00" cy="782.90" rx="2.5" ry="1.35"/></g><text x="1209" y="778" text-anchor="end" font-size="14" fill="#333" font-style="italic">GPIO26</text><rect x="1122" y="768" width="10" height="10" rx="3" fill="#d9d9d9" stroke="#999"/><rect x="1136" y="792" width="9" height="9" rx="2" fill="#5a8" stroke="#5a8" stroke-width="3"/><text x="1150" y="801" font-size="12" fill="#888">0</text></g></svg>
</body></html>
